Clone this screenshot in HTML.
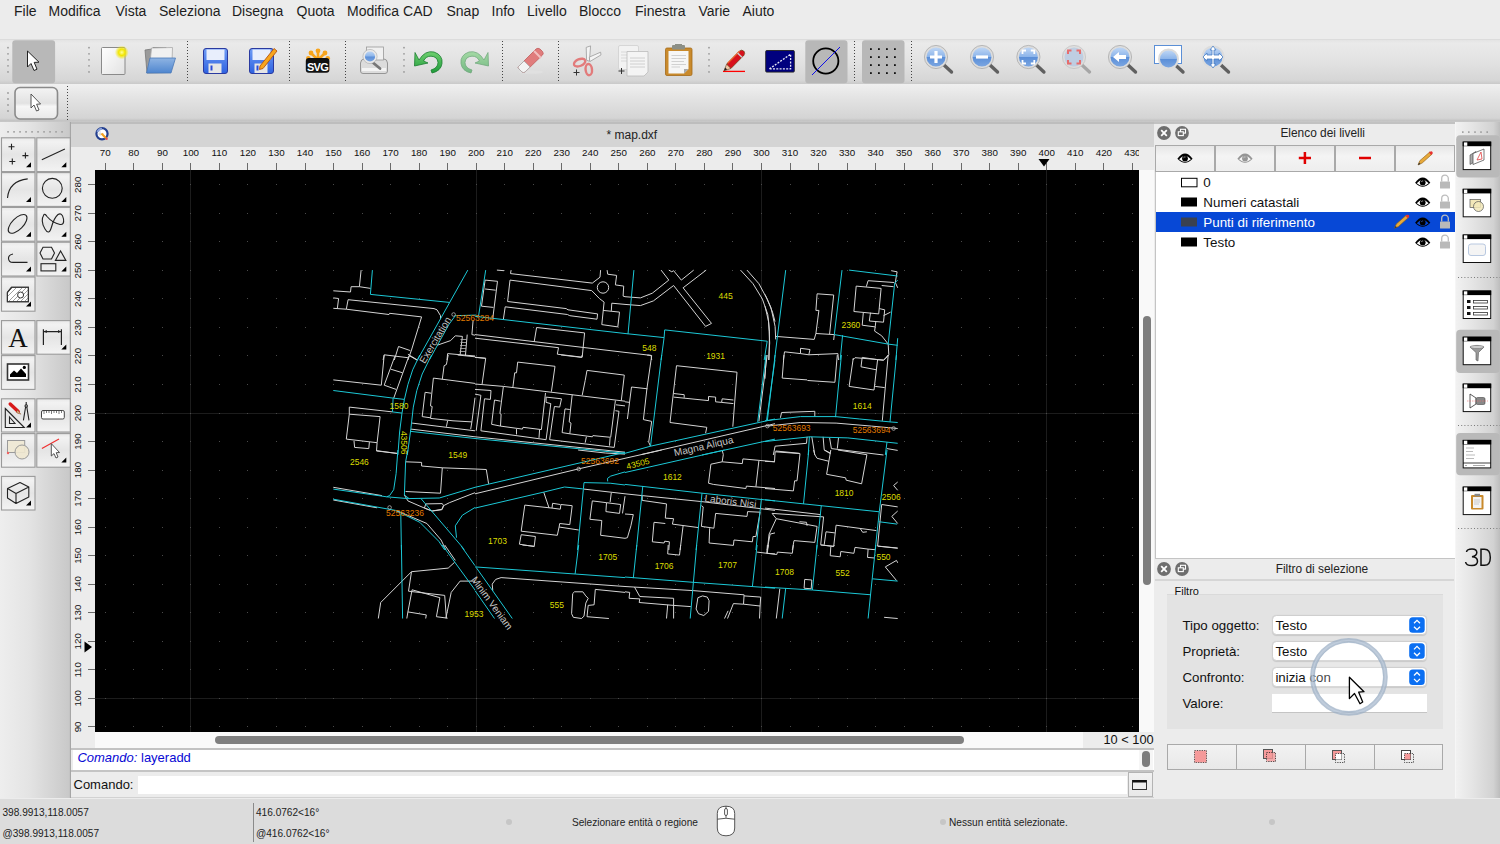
<!DOCTYPE html><html><head><meta charset="utf-8"><style>
*{box-sizing:border-box}
body{margin:0;width:1500px;height:844px;position:relative;overflow:hidden;background:#ececec;font-family:"Liberation Sans",sans-serif;color:#222}
.a{position:absolute}
.t{position:absolute;white-space:nowrap;line-height:1}
.menu span{position:absolute;top:3px;font-size:14px;color:#1d1d1d;line-height:16px}
.tb{position:absolute;left:0;width:1500px}
.sep{position:absolute;width:1px;border-left:1px dotted #555}
.hdots{position:absolute;width:2px;background-image:radial-gradient(circle,#9a9a9a 0.9px,transparent 1.1px);background-size:3px 5.9px}
.tool{position:absolute;width:34px;height:35px;border:1px solid #a8a8a8;background:linear-gradient(#f4f4f4,#e6e6e6 50%,#f0f0f0)}
.tool .c{position:absolute;right:2px;bottom:2px;width:0;height:0;border-left:8px solid transparent;border-bottom:8px solid #000}
</style></head><body>
<div class="a menu" style="left:0;top:0;width:1500px;height:39px;background:#ececec">
<span style="left:14px">File</span><span style="left:48.5px">Modifica</span><span style="left:115.5px">Vista</span><span style="left:159px">Seleziona</span><span style="left:232px">Disegna</span><span style="left:296.5px">Quota</span><span style="left:347px">Modifica CAD</span><span style="left:446.5px">Snap</span><span style="left:491.5px">Info</span><span style="left:527px">Livello</span><span style="left:579px">Blocco</span><span style="left:635px">Finestra</span><span style="left:698.5px">Varie</span><span style="left:742.5px">Aiuto</span>
</div>
<!-- toolbar 1 -->
<div class="tb" style="top:39px;height:45px;background:linear-gradient(#e4e4e4,#eaeaea 8%,#e2e2e2 50%,#d6d6d6 92%,#c9c9c9);border-top:1px solid #dcdcdc"></div>
<!-- toolbar 2 -->
<div class="tb" style="top:84px;height:38px;background:linear-gradient(#f0f0f0,#e4e4e4 35%,#d4d4d4 90%,#c4c4c4 96%,#c8c8c8)"></div>

<svg class="a" style="left:0;top:0" width="1500" height="124" viewBox="0 0 1500 124">
<defs>
<linearGradient id="gdoc" x1="0" y1="0" x2="1" y2="1"><stop offset="0" stop-color="#ffffff"/><stop offset="1" stop-color="#e2e2e2"/></linearGradient>
<radialGradient id="gglow"><stop offset="0" stop-color="#ffff9a"/><stop offset="0.45" stop-color="#f2e600"/><stop offset="1" stop-color="#f2e600" stop-opacity="0"/></radialGradient>
<linearGradient id="gfold" x1="0" y1="0" x2="0" y2="1"><stop offset="0" stop-color="#8fb4e3"/><stop offset="1" stop-color="#4f86cf"/></linearGradient>
<linearGradient id="gsave" x1="0" y1="0" x2="0" y2="1"><stop offset="0" stop-color="#6f9cf5"/><stop offset="1" stop-color="#2f62e0"/></linearGradient>
<linearGradient id="gzoom" x1="0" y1="0" x2="0" y2="1"><stop offset="0" stop-color="#c4daf6"/><stop offset="0.48" stop-color="#8db5ea"/><stop offset="0.52" stop-color="#5b8fd8"/><stop offset="1" stop-color="#7ea8e2"/></linearGradient>
<linearGradient id="ggreen" x1="0" y1="0" x2="0" y2="1"><stop offset="0" stop-color="#6fd06f"/><stop offset="1" stop-color="#1e9a3a"/></linearGradient>
<linearGradient id="gbtn2" x1="0" y1="0" x2="0" y2="1"><stop offset="0" stop-color="#f4f4f4"/><stop offset="0.5" stop-color="#e2e2e2"/><stop offset="0.6" stop-color="#f6f6f6"/><stop offset="1" stop-color="#e8e8e8"/></linearGradient>
</defs>
<g fill="#9a9a9a">
<circle cx="8" cy="47.7" r="0.9"/><circle cx="8" cy="53.8" r="0.9"/><circle cx="8" cy="59.8" r="0.9"/><circle cx="8" cy="65.8" r="0.9"/><circle cx="8" cy="71.9" r="0.9"/>
<circle cx="89" cy="47.7" r="0.9"/><circle cx="89" cy="53.8" r="0.9"/><circle cx="89" cy="59.8" r="0.9"/><circle cx="89" cy="65.8" r="0.9"/><circle cx="89" cy="71.9" r="0.9"/>
<circle cx="404" cy="47.7" r="0.9"/><circle cx="404" cy="53.8" r="0.9"/><circle cx="404" cy="59.8" r="0.9"/><circle cx="404" cy="65.8" r="0.9"/><circle cx="404" cy="71.9" r="0.9"/>
<circle cx="709" cy="47.7" r="0.9"/><circle cx="709" cy="53.8" r="0.9"/><circle cx="709" cy="59.8" r="0.9"/><circle cx="709" cy="65.8" r="0.9"/><circle cx="709" cy="71.9" r="0.9"/>
<circle cx="8" cy="93" r="0.9"/><circle cx="8" cy="99" r="0.9"/><circle cx="8" cy="105" r="0.9"/><circle cx="8" cy="111" r="0.9"/>
</g>
<g stroke="#444" stroke-width="1" stroke-dasharray="1 2">
<line x1="187.5" y1="41" x2="187.5" y2="82"/><line x1="289.5" y1="41" x2="289.5" y2="82"/><line x1="345.5" y1="41" x2="345.5" y2="82"/><line x1="502.5" y1="41" x2="502.5" y2="82"/><line x1="558.5" y1="41" x2="558.5" y2="82"/><line x1="854.5" y1="41" x2="854.5" y2="82"/><line x1="911.5" y1="41" x2="911.5" y2="82"/>
<line x1="67.5" y1="86" x2="67.5" y2="120"/>
</g>
<!-- active select -->
<rect x="12.3" y="40.2" width="42.8" height="43" rx="3" fill="#b8b8b8"/>
<path d="M27.5 51 L27.5 67 L31 63.5 L34 70.5 L37 69.2 L34.2 62.4 L39 62.2 Z" fill="#fff" stroke="#222" stroke-width="1"/>
<!-- new doc -->
<rect x="101.5" y="47.5" width="23.5" height="27" rx="1" fill="url(#gdoc)" stroke="#8a8a8a" stroke-width="1"/>
<circle cx="121.8" cy="52.4" r="7" fill="url(#gglow)"/>
<!-- open folder -->
<path d="M145 50 L152 49 L153 47.5 L166 47.5 L167 50 L169 72.5 L147 73 Z" fill="#9a9a9a" stroke="#777" stroke-width="0.8"/>
<path d="M151.5 48 L172.5 47.5 L172 62 L150 63 Z" fill="#f1f1f1" stroke="#aaa" stroke-width="0.8"/>
<path d="M150 58 L175.5 58 L171 73 L146.5 73 Z" fill="url(#gfold)" stroke="#4a79b8" stroke-width="0.8"/>
<!-- save -->
<rect x="203.5" y="48.5" width="24" height="25" rx="2.5" fill="url(#gsave)" stroke="#2a3aa0" stroke-width="1"/>
<rect x="206.5" y="49.5" width="18" height="10.5" fill="#e8eefc"/>
<rect x="208.5" y="63.5" width="13" height="9.5" fill="#e6e6e6"/>
<rect x="210.5" y="65.5" width="2" height="5" fill="#2a4ad8"/>
<!-- save as -->
<rect x="249.5" y="48.5" width="24" height="25" rx="2.5" fill="url(#gsave)" stroke="#2a3aa0" stroke-width="1"/>
<rect x="252.5" y="49.5" width="18" height="10.5" fill="#e8eefc"/>
<rect x="254.5" y="63.5" width="13" height="9.5" fill="#e6e6e6"/>
<rect x="256.5" y="65.5" width="2" height="5" fill="#2a4ad8"/>
<path d="M260 66 L274 48.5 L277 51 L263 68.5 L259.5 69.5 Z" fill="#f7a51d" stroke="#b5530e" stroke-width="0.9"/>
<!-- SVG logo -->
<g fill="#f7a41c" stroke="#f7a41c">
<path d="M318 60 L318 51.5 M318 60 L311.5 53.5 M318 60 L324.5 53.5 M318 60 L309 59 M318 60 L327 59" stroke-width="2.6"/>
<circle cx="318" cy="50.8" r="2.4" stroke="none"/><circle cx="311" cy="53" r="2.4" stroke="none"/><circle cx="325" cy="53" r="2.4" stroke="none"/><circle cx="308.3" cy="58.3" r="2.3" stroke="none"/><circle cx="327.7" cy="58.3" r="2.3" stroke="none"/>
</g>
<rect x="305.8" y="58" width="23.6" height="14.8" rx="3" fill="#111"/>
<text x="317.6" y="70.8" font-family="Liberation Sans" font-weight="bold" font-size="11" fill="#fff" text-anchor="middle" letter-spacing="-0.6">SVG</text>
<!-- print preview -->
<path d="M360.5 63 Q361 59 364 59 L384 59 Q387 59 387.5 63 L387.5 71 Q387.5 73.5 385 73.5 L363 73.5 Q360.5 73.5 360.5 71 Z" fill="#dcdcdc" stroke="#8c8c8c" stroke-width="0.9"/>
<rect x="362" y="68" width="24" height="3" fill="#f4f4f4"/>
<rect x="366.5" y="47" width="17" height="13" fill="#f0f0f0" stroke="#9a9a9a" stroke-width="0.8"/>
<line x1="371" y1="61" x2="380" y2="68.5" stroke="#777" stroke-width="2.8" stroke-linecap="round"/>
<circle cx="370" cy="56.5" r="6" fill="url(#gzoom)" stroke="#e8e8e8" stroke-width="1.8"/>
<circle cx="370" cy="56.5" r="7.1" fill="none" stroke="#aaa" stroke-width="0.6"/>
<!-- undo -->
<path d="M419 60 Q425 50 434 52 Q443 55 442 63.5 Q441 71 432 73 L431 70 Q438 68 438 62.5 Q437.5 56.5 431 56.2 Q426 56 423.5 61 L428 63 L414.5 66 L415 52.5 Z" fill="url(#ggreen)" stroke="#1a7d30" stroke-width="0.8"/>
<!-- redo -->
<g opacity="0.55"><path d="M484 60 Q478 50 469 52 Q460 55 461 63.5 Q462 71 471 73 L472 70 Q465 68 465 62.5 Q465.5 56.5 472 56.2 Q477 56 479.5 61 L475 63 L488.5 66 L488 52.5 Z" fill="url(#ggreen)" stroke="#1a7d30" stroke-width="0.8"/></g>
<!-- eraser -->
<ellipse cx="531" cy="72" rx="12" ry="1.8" fill="#e0e0e0"/>
<path d="M518.5 66.5 L536 49 Q538 47.5 540 49 L542.5 51.5 Q544 53.5 542.5 55 L525 72 Q523.5 73 522 72 L519 69 Q517.5 67.5 518.5 66.5 Z" fill="#e07c7c" stroke="#c25c5c" stroke-width="0.8"/>
<path d="M518.5 66.5 L524 61 L530 67 L525 72 Q523.5 73 522 72 L519 69 Q517.5 67.5 518.5 66.5 Z" fill="#f3f3f3" stroke="#aaa" stroke-width="0.8"/>
<path d="M534 51 L541 58" stroke="#f2c0c0" stroke-width="2"/>
<!-- scissors -->
<path d="M586.2 47.4 L590.6 45.9 L589.4 61.2 L586.6 60.3 Z" fill="#f4f4f4" stroke="#9a9a9a" stroke-width="0.8"/>
<path d="M589.3 57.1 L600.6 52.2 L601 54.9 L589.8 61.6 Z" fill="#f4f4f4" stroke="#9a9a9a" stroke-width="0.8"/>
<ellipse cx="579.6" cy="62.6" rx="6" ry="3.4" fill="none" stroke="#e27b7b" stroke-width="2.4" transform="rotate(-22 579.6 62.6)"/>
<ellipse cx="588.8" cy="69.6" rx="3.2" ry="5.6" fill="none" stroke="#e27b7b" stroke-width="2.4" transform="rotate(-6 588.8 69.6)"/>
<path d="M573.5 72.5 h6 M576.5 69.5 v6" stroke="#333" stroke-width="1"/>
<!-- copy -->
<rect x="618.5" y="45.5" width="20" height="24" rx="1.5" fill="#f2f2f2" stroke="#cfcfcf" stroke-width="0.8"/>
<g stroke="#d2d2d2" stroke-width="0.8"><line x1="621" y1="52" x2="635" y2="52"/><line x1="621" y1="55" x2="635" y2="55"/><line x1="621" y1="58" x2="635" y2="58"/><line x1="621" y1="61" x2="635" y2="61"/></g>
<path d="M627 51.5 L648 51.5 L648 72 L644 76 L627 76 Z" fill="#f4f4f4" stroke="#bbb" stroke-width="0.8"/>
<g stroke="#c6c6c6" stroke-width="0.8"><line x1="630" y1="58" x2="645" y2="58"/><line x1="630" y1="61" x2="645" y2="61"/><line x1="630" y1="64" x2="645" y2="64"/><line x1="630" y1="67" x2="645" y2="67"/></g>
<path d="M618.5 71 h6 M621.5 68 v6" stroke="#333" stroke-width="1"/>
<!-- paste -->
<rect x="665.5" y="48" width="26.5" height="27.5" rx="1.5" fill="#c98a2c" stroke="#a56a18" stroke-width="0.8"/>
<path d="M668.5 51 L688.5 51 L688.5 69 L684 73.5 L668.5 73.5 Z" fill="#f6f6f6"/>
<path d="M684 73.5 L688.5 69 L684 69 Z" fill="#a9a9a9"/>
<rect x="672" y="45" width="13" height="4.5" rx="1" fill="#8c8f86"/>
<rect x="675" y="44" width="7" height="2" fill="#8c8f86"/>
<g stroke="#c8c8c8" stroke-width="0.8"><line x1="671.5" y1="55.5" x2="686" y2="55.5"/><line x1="671.5" y1="58.5" x2="686" y2="58.5"/><line x1="671.5" y1="61.5" x2="684" y2="61.5"/><line x1="671.5" y1="64.5" x2="686" y2="64.5"/><line x1="671.5" y1="67" x2="680" y2="67"/></g>
<!-- pencil -->
<line x1="723" y1="71.4" x2="745" y2="71.4" stroke="#f00" stroke-width="1.3"/>
<path d="M726.6 64.3 L739.6 51 Q741.8 49.2 743.8 51.2 Q745.6 53.2 743.9 55.3 L730.9 68.5 Z" fill="#d8101c" stroke="#6a3a10" stroke-width="0.7"/>
<path d="M727.6 63.3 L739.8 51" stroke="#e8602a" stroke-width="1.3"/>
<path d="M737.6 53 L741.9 57.2" stroke="#c8d0d0" stroke-width="1.5"/>
<path d="M726.6 64.3 L730.9 68.5 L724 70.8 Z" fill="#f0c8a8" stroke="#6a3a10" stroke-width="0.6"/>
<path d="M724 70.8 L725.2 67.6 L727.2 69.6 Z" fill="#222"/>
<!-- blue rect -->
<rect x="765.7" y="50.5" width="28.6" height="21.6" rx="1" fill="#00007e" stroke="#222" stroke-width="0.9"/>
<path d="M769.4 68.9 L790.6 54.2 L790.6 68.9 Z" fill="none" stroke="#e6e6f4" stroke-width="1.3" stroke-dasharray="2 1.3"/>
<!-- active circle -->
<rect x="805.3" y="40.2" width="42.2" height="43" rx="3" fill="#b8b8b8"/>
<circle cx="825.8" cy="61" r="12.6" fill="none" stroke="#000" stroke-width="1.8"/>
<line x1="812" y1="75" x2="840" y2="47" stroke="#1010e8" stroke-width="1"/>
<!-- active grid -->
<rect x="862" y="40.2" width="42.5" height="43" rx="3" fill="#b8b8b8"/>
<g fill="#111">
<rect x="870" y="48.2" width="1.8" height="1.8"/><rect x="878" y="48.2" width="1.8" height="1.8"/><rect x="886" y="48.2" width="1.8" height="1.8"/><rect x="894" y="48.2" width="1.8" height="1.8"/>
<rect x="870" y="56.2" width="1.8" height="1.8"/><rect x="878" y="56.2" width="1.8" height="1.8"/><rect x="886" y="56.2" width="1.8" height="1.8"/><rect x="894" y="56.2" width="1.8" height="1.8"/>
<rect x="870" y="64.2" width="1.8" height="1.8"/><rect x="878" y="64.2" width="1.8" height="1.8"/><rect x="886" y="64.2" width="1.8" height="1.8"/><rect x="894" y="64.2" width="1.8" height="1.8"/>
<rect x="870" y="72.2" width="1.8" height="1.8"/><rect x="878" y="72.2" width="1.8" height="1.8"/><rect x="886" y="72.2" width="1.8" height="1.8"/><rect x="894" y="72.2" width="1.8" height="1.8"/>
</g>
<!-- zoom icons -->
<g id="zi">
<line x1="944" y1="65" x2="951.5" y2="72" stroke="#606060" stroke-width="3.4" stroke-linecap="round"/>
<circle cx="936" cy="57" r="10.5" fill="url(#gzoom)" stroke="#dcdcdc" stroke-width="2"/>
<circle cx="936" cy="57" r="11.6" fill="none" stroke="#9a9a9a" stroke-width="0.6"/>
<path d="M930 57 h12 M936 51 v12" stroke="#fff" stroke-width="3.2"/>
</g>
<g>
<line x1="990" y1="65" x2="997.5" y2="72" stroke="#606060" stroke-width="3.4" stroke-linecap="round"/>
<circle cx="982" cy="57" r="10.5" fill="url(#gzoom)" stroke="#dcdcdc" stroke-width="2"/>
<circle cx="982" cy="57" r="11.6" fill="none" stroke="#9a9a9a" stroke-width="0.6"/>
<path d="M976 57 h12" stroke="#fff" stroke-width="3.2"/>
</g>
<g>
<line x1="1036.4" y1="65" x2="1043.9" y2="72" stroke="#606060" stroke-width="3.4" stroke-linecap="round"/>
<circle cx="1028.4" cy="57" r="10.5" fill="url(#gzoom)" stroke="#dcdcdc" stroke-width="2"/>
<circle cx="1028.4" cy="57" r="11.6" fill="none" stroke="#9a9a9a" stroke-width="0.6"/>
<path d="M1022.5 54 v-3.5 h3.5 M1030.8 50.5 h3.5 v3.5 M1034.3 60 v3.5 h-3.5 M1026 63.5 h-3.5 v-3.5" fill="none" stroke="#fff" stroke-width="1.8"/>
</g>
<g opacity="0.8">
<line x1="1082" y1="65" x2="1089.5" y2="72" stroke="#999" stroke-width="3.2" stroke-linecap="round"/>
<circle cx="1074" cy="57" r="10.5" fill="#b6c9e2" stroke="#dcdcdc" stroke-width="2"/>
<circle cx="1074" cy="57" r="11.6" fill="none" stroke="#b0b0b0" stroke-width="0.6"/>
<path d="M1068 54 v-3.5 h3.5 M1076.5 50.5 h3.5 v3.5 M1080 60 v3.5 h-3.5 M1071.5 63.5 h-3.5 v-3.5" fill="none" stroke="#e85050" stroke-width="2"/>
</g>
<g>
<line x1="1128" y1="65" x2="1135.5" y2="72" stroke="#606060" stroke-width="3.4" stroke-linecap="round"/>
<circle cx="1120" cy="57" r="10.5" fill="url(#gzoom)" stroke="#dcdcdc" stroke-width="2"/>
<circle cx="1120" cy="57" r="11.6" fill="none" stroke="#9a9a9a" stroke-width="0.6"/>
<path d="M1113 57 L1119 52 L1119 55 L1126 55 L1126 59 L1119 59 L1119 62 Z" fill="#fff"/>
</g>
<g>
<rect x="1154.5" y="45.5" width="27" height="18" fill="#fff" stroke="#5b8fd6" stroke-width="1"/>
<line x1="1176.5" y1="66" x2="1183" y2="72" stroke="#606060" stroke-width="3.4" stroke-linecap="round"/>
<circle cx="1168.5" cy="59" r="9.5" fill="url(#gzoom)" stroke="#dcdcdc" stroke-width="2"/>
</g>
<g>
<line x1="1221" y1="65" x2="1228.5" y2="72" stroke="#606060" stroke-width="3.4" stroke-linecap="round"/>
<circle cx="1213" cy="57" r="10.5" fill="url(#gzoom)" stroke="#dcdcdc" stroke-width="2"/>
<path d="M1213 46 l-3 4 h2 v5 h-5 v-2 l-4 4 l4 4 v-2 h5 v5 h-2 l3 4 l3 -4 h-2 v-5 h5 v2 l4 -4 l-4 -4 v2 h-5 v-5 h2 Z" fill="#fff" stroke="#4a7fc4" stroke-width="0.8"/>
</g>
<!-- toolbar 2 button -->
<rect x="15" y="87.5" width="42.5" height="31.5" rx="5" fill="url(#gbtn2)" stroke="#8a8a8a" stroke-width="1.6"/>
<path d="M31 94 L31 108 L34 105 L36.5 111 L39 110 L36.6 104.2 L40.6 104 Z" fill="#fff" stroke="#444" stroke-width="0.9"/>
</svg>

<div class="a" style="left:0;top:122px;width:71px;height:676px;background:linear-gradient(90deg,#eeeeee,#e4e4e4 40%,#c9c9c9 97%,#b8b8b8)"></div>
<div class="a" style="left:70px;top:122px;width:1px;height:676px;background:#a6a6a6"></div>
<svg class="a" style="left:0;top:122px" width="72" height="400" viewBox="0 122 72 400">
<defs><linearGradient id="gtool" x1="0" y1="0" x2="0" y2="1"><stop offset="0" stop-color="#e9e9e9"/><stop offset="0.12" stop-color="#f2f2f2"/><stop offset="0.5" stop-color="#e5e5e5"/><stop offset="1" stop-color="#f3f3f3"/></linearGradient></defs>
<g fill="#a4a4a4"><rect x="7.2" y="131" width="1.7" height="1.7"/><rect x="13.2" y="131" width="1.7" height="1.7"/><rect x="19.2" y="131" width="1.7" height="1.7"/><rect x="25.2" y="131" width="1.7" height="1.7"/><rect x="31.2" y="131" width="1.7" height="1.7"/><rect x="37.2" y="131" width="1.7" height="1.7"/><rect x="43.2" y="131" width="1.7" height="1.7"/><rect x="49.2" y="131" width="1.7" height="1.7"/><rect x="55.2" y="131" width="1.7" height="1.7"/><rect x="61.2" y="131" width="1.7" height="1.7"/></g>
<g fill="url(#gtool)" stroke="#9a9a9a" stroke-width="1.1">
<rect x="1.5" y="137.8" width="33.5" height="33.8"/><rect x="36.8" y="137.8" width="33.5" height="33.8"/>
<rect x="1.5" y="172.6" width="33.5" height="33.8"/><rect x="36.8" y="172.6" width="33.5" height="33.8"/>
<rect x="1.5" y="207.4" width="33.5" height="33.8"/><rect x="36.8" y="207.4" width="33.5" height="33.8"/>
<rect x="1.5" y="242.2" width="33.5" height="33.8"/><rect x="36.8" y="242.2" width="33.5" height="33.8"/>
<rect x="1.5" y="277" width="33.5" height="34.2"/>
<rect x="1.5" y="320.6" width="33.5" height="33.6"/><rect x="36.8" y="320.6" width="33.5" height="33.6"/>
<rect x="1.5" y="355.6" width="33.5" height="33.8"/>
<rect x="1.5" y="398.8" width="33.5" height="33.2"/><rect x="36.8" y="398.8" width="33.5" height="33.2"/>
<rect x="1.5" y="433.6" width="33.5" height="33.6"/><rect x="36.8" y="433.6" width="33.5" height="33.6"/>
<rect x="1.5" y="476.4" width="33.5" height="33.6"/>
</g>
<g fill="#000">
<path d="M26 167.3 h5 v-5 Z"/><path d="M61.3 167.3 h5 v-5 Z"/>
<path d="M26 202 h5 v-5 Z"/><path d="M61.3 202 h5 v-5 Z"/>
<path d="M26 236.8 h5 v-5 Z"/><path d="M61.3 236.8 h5 v-5 Z"/>
<path d="M26 271.6 h5 v-5 Z"/><path d="M61.3 271.6 h5 v-5 Z"/>
<path d="M26 306.6 h5 v-5 Z"/>
<path d="M61.3 349.5 h5 v-5 Z"/>
<path d="M26 427.5 h5 v-5 Z"/>
<path d="M61.3 462.5 h5 v-5 Z"/>
<path d="M26 505.5 h5 v-5 Z"/>
</g>
<g stroke="#222" stroke-width="1.1" fill="none">
<path d="M8.5 146.7 h6 M11.5 143.7 v6 M22.4 155.6 h6 M25.4 152.6 v6 M9.3 161.5 h6 M12.3 158.5 v6"/>
<path d="M41.8 159.7 L64.9 149"/>
<path d="M7.5 198 Q9 181 27.7 178.9"/>
<circle cx="52.3" cy="188.3" r="9.9"/>
<ellipse cx="17.6" cy="223.9" rx="12" ry="5.6" transform="rotate(-45 17.6 223.9)"/>
<path d="M44 214.5 Q40 221 45 229 Q49 236 51.5 227 Q54 218 58 214.5 Q62 212 63.5 219 Q64.5 225 60 224.5 Q52 222.5 47 216.5 Q45 213.5 44 214.5 Z"/>
<path d="M13 254 Q8.5 255 8.5 258.2 Q8.5 262.4 13 262.4 L27.5 262.4"/>
<path d="M43 247.2 L51.5 247.2 L54.5 253 L51.5 259 L43 259 L40 253 Z"/>
<path d="M60.6 251 L65.9 260.4 L55.4 260.4 Z"/>
<rect x="41" y="263.7" width="14.8" height="7.2"/>
</g>
<g stroke="#333" stroke-width="1.1">
<path d="M11.5 287.3 L28.4 287.3 L28.4 301.8 L7.4 301.8 L7.4 292.5 Z" fill="#fff"/>
</g>
<clipPath id="hclip"><path d="M11.5 287.3 L28.4 287.3 L28.4 301.8 L7.4 301.8 L7.4 292.5 Z"/></clipPath>
<g clip-path="url(#hclip)" stroke="#777" stroke-width="0.7"><path d="M4 300 l14 -14 M7 303 l16 -16 M11 303 l16 -16 M15 303 l16 -16 M19 303 l16 -16 M23 303 l10 -10 M4 296 l10 -10"/></g>
<path d="M11.5 287.3 L28.4 287.3 L28.4 301.8 L7.4 301.8 L7.4 292.5 Z" fill="none" stroke="#333" stroke-width="1.1"/>
<circle cx="20.6" cy="295" r="3" fill="#fff" stroke="#333" stroke-width="1"/>
<text x="18" y="346.8" font-family="Liberation Serif" font-size="27" text-anchor="middle" fill="#111">A</text>
<g stroke="#222" stroke-width="1.2" fill="none"><path d="M43.4 329.2 V344.9 M61.4 329.2 V344.9 M44 331.6 H61"/></g>
<path d="M43.8 331.6 l3 -1.5 v3 Z M61 331.6 l-3 -1.5 v3 Z" fill="#222"/>
<rect x="7.5" y="364" width="21" height="16" fill="#fff" stroke="#333" stroke-width="1.6"/>
<path d="M10 377 L10 374.5 L14 370.5 L17 373 L21 368.5 L26 374 L26 377 Z" fill="#000"/>
<circle cx="24.3" cy="367.4" r="1.6" fill="#000"/>
<g stroke="#222" stroke-width="1.1" fill="none">
<path d="M5.3 408.5 L24.3 427.5 L5.3 427.5 Z"/><path d="M9.5 417 L15 423.5 L9.5 423.5 Z"/>
<path d="M25.6 407 L23.4 420.3 M26.8 407 L29 420.3 M26.2 402 V405"/><circle cx="26.2" cy="405.9" r="1.2"/>
</g>
<path d="M10.2 404 L18.2 411.6" stroke="#d81818" stroke-width="3.4" stroke-linecap="round"/><path d="M17.6 410 L20.8 414.2 L16.4 412.4 Z" fill="#e8b88a" stroke="#7a4a20" stroke-width="0.5"/>
<rect x="41.5" y="410.5" width="22.8" height="8.5" rx="1.5" fill="#fff" stroke="#444" stroke-width="1"/>
<path d="M44 411 v3 M46.5 411 v2 M49 411 v2 M51.5 411 v3 M54 411 v2 M56.5 411 v2 M59 411 v3 M61.5 411 v2" stroke="#444" stroke-width="0.7"/>
<rect x="7.5" y="440.5" width="17.2" height="12" fill="#efe9d6" stroke="#9a9a9a" stroke-width="1"/>
<circle cx="22" cy="452" r="7" fill="#efe8d0" fill-opacity="0.9" stroke="#9a9a9a" stroke-width="1"/>
<circle cx="8" cy="453" r="1.2" fill="#f06060"/>
<line x1="41.9" y1="448.6" x2="59" y2="439" stroke="#f03030" stroke-width="1.2"/>
<path d="M51.3 443.6 L51.3 456 L54 453.6 L56 458 L58 457 L56.2 452.7 L59.5 452.5 Z" fill="#fff" stroke="#444" stroke-width="0.9"/>
<g stroke="#222" stroke-width="1.1" fill="none" stroke-linejoin="round">
<path d="M7.5 488.5 L20 482.5 L28.8 487 L16 493.5 Z M7.5 488.5 L7.5 498 L16 503.5 L28.8 497 L28.8 487 M16 493.5 L16 503.5"/>
</g>
</svg>

<div class="a" style="left:71px;top:122px;width:1083px;height:1.5px;background:#bdbdbd"></div>
<div class="a" style="left:71px;top:123.5px;width:1083px;height:23px;background:#d4d4d4"></div>
<div class="t" style="left:606.5px;top:128.5px;font-size:12px;color:#222">* map.dxf</div>
<svg class="a" style="left:94px;top:126px" width="16" height="16" viewBox="0 0 16 16">
<circle cx="8" cy="7.8" r="5.6" fill="#fff" stroke="#233f8f" stroke-width="2.2"/>
<path d="M3.5 6 A5 5 0 0 1 8 2.7" stroke="#8aa0d8" stroke-width="2" fill="none"/>
<path d="M6 5 v5 M4 8 h6" stroke="#bbb" stroke-width="0.6"/>
<path d="M7.5 7.5 L12 12.2" stroke="#f4a020" stroke-width="2.2"/><circle cx="12.6" cy="12.8" r="1.2" fill="#e05050"/>
</svg>
<div class="a" style="left:71px;top:146.5px;width:1083px;height:23.5px;background:#ececec"></div>
<div class="a" style="left:71px;top:170px;width:24px;height:562px;background:#ececec"></div>
<div class="a" style="left:95px;top:170px;width:1044px;height:562px;background:#000;overflow:hidden">
<svg width="1044" height="562" viewBox="95 170 1044 562" style="position:absolute;left:0;top:0">
<line x1="190.5" y1="170" x2="190.5" y2="732" stroke="#1c1c1c" stroke-width="1"/>
<line x1="476.5" y1="170" x2="476.5" y2="732" stroke="#1c1c1c" stroke-width="1"/>
<line x1="761.5" y1="170" x2="761.5" y2="732" stroke="#1c1c1c" stroke-width="1"/>
<line x1="1046.5" y1="170" x2="1046.5" y2="732" stroke="#1c1c1c" stroke-width="1"/>
<line x1="95" y1="698.5" x2="1139" y2="698.5" stroke="#1c1c1c" stroke-width="1"/>
<line x1="95" y1="413.5" x2="1139" y2="413.5" stroke="#1c1c1c" stroke-width="1"/>
<path fill="#4a4a4a" d="M105 726h1v1h-1zM105 698h1v1h-1zM105 669h1v1h-1zM105 641h1v1h-1zM105 612h1v1h-1zM105 584h1v1h-1zM105 555h1v1h-1zM105 527h1v1h-1zM105 498h1v1h-1zM105 470h1v1h-1zM105 441h1v1h-1zM105 413h1v1h-1zM105 384h1v1h-1zM105 355h1v1h-1zM105 327h1v1h-1zM105 298h1v1h-1zM105 270h1v1h-1zM105 241h1v1h-1zM105 213h1v1h-1zM105 184h1v1h-1zM133 726h1v1h-1zM133 698h1v1h-1zM133 669h1v1h-1zM133 641h1v1h-1zM133 612h1v1h-1zM133 584h1v1h-1zM133 555h1v1h-1zM133 527h1v1h-1zM133 498h1v1h-1zM133 470h1v1h-1zM133 441h1v1h-1zM133 413h1v1h-1zM133 384h1v1h-1zM133 355h1v1h-1zM133 327h1v1h-1zM133 298h1v1h-1zM133 270h1v1h-1zM133 241h1v1h-1zM133 213h1v1h-1zM133 184h1v1h-1zM162 726h1v1h-1zM162 698h1v1h-1zM162 669h1v1h-1zM162 641h1v1h-1zM162 612h1v1h-1zM162 584h1v1h-1zM162 555h1v1h-1zM162 527h1v1h-1zM162 498h1v1h-1zM162 470h1v1h-1zM162 441h1v1h-1zM162 413h1v1h-1zM162 384h1v1h-1zM162 355h1v1h-1zM162 327h1v1h-1zM162 298h1v1h-1zM162 270h1v1h-1zM162 241h1v1h-1zM162 213h1v1h-1zM162 184h1v1h-1zM190 726h1v1h-1zM190 698h1v1h-1zM190 669h1v1h-1zM190 641h1v1h-1zM190 612h1v1h-1zM190 584h1v1h-1zM190 555h1v1h-1zM190 527h1v1h-1zM190 498h1v1h-1zM190 470h1v1h-1zM190 441h1v1h-1zM190 413h1v1h-1zM190 384h1v1h-1zM190 355h1v1h-1zM190 327h1v1h-1zM190 298h1v1h-1zM190 270h1v1h-1zM190 241h1v1h-1zM190 213h1v1h-1zM190 184h1v1h-1zM219 726h1v1h-1zM219 698h1v1h-1zM219 669h1v1h-1zM219 641h1v1h-1zM219 612h1v1h-1zM219 584h1v1h-1zM219 555h1v1h-1zM219 527h1v1h-1zM219 498h1v1h-1zM219 470h1v1h-1zM219 441h1v1h-1zM219 413h1v1h-1zM219 384h1v1h-1zM219 355h1v1h-1zM219 327h1v1h-1zM219 298h1v1h-1zM219 270h1v1h-1zM219 241h1v1h-1zM219 213h1v1h-1zM219 184h1v1h-1zM247 726h1v1h-1zM247 698h1v1h-1zM247 669h1v1h-1zM247 641h1v1h-1zM247 612h1v1h-1zM247 584h1v1h-1zM247 555h1v1h-1zM247 527h1v1h-1zM247 498h1v1h-1zM247 470h1v1h-1zM247 441h1v1h-1zM247 413h1v1h-1zM247 384h1v1h-1zM247 355h1v1h-1zM247 327h1v1h-1zM247 298h1v1h-1zM247 270h1v1h-1zM247 241h1v1h-1zM247 213h1v1h-1zM247 184h1v1h-1zM276 726h1v1h-1zM276 698h1v1h-1zM276 669h1v1h-1zM276 641h1v1h-1zM276 612h1v1h-1zM276 584h1v1h-1zM276 555h1v1h-1zM276 527h1v1h-1zM276 498h1v1h-1zM276 470h1v1h-1zM276 441h1v1h-1zM276 413h1v1h-1zM276 384h1v1h-1zM276 355h1v1h-1zM276 327h1v1h-1zM276 298h1v1h-1zM276 270h1v1h-1zM276 241h1v1h-1zM276 213h1v1h-1zM276 184h1v1h-1zM305 726h1v1h-1zM305 698h1v1h-1zM305 669h1v1h-1zM305 641h1v1h-1zM305 612h1v1h-1zM305 584h1v1h-1zM305 555h1v1h-1zM305 527h1v1h-1zM305 498h1v1h-1zM305 470h1v1h-1zM305 441h1v1h-1zM305 413h1v1h-1zM305 384h1v1h-1zM305 355h1v1h-1zM305 327h1v1h-1zM305 298h1v1h-1zM305 270h1v1h-1zM305 241h1v1h-1zM305 213h1v1h-1zM305 184h1v1h-1zM333 726h1v1h-1zM333 698h1v1h-1zM333 669h1v1h-1zM333 641h1v1h-1zM333 612h1v1h-1zM333 584h1v1h-1zM333 555h1v1h-1zM333 527h1v1h-1zM333 498h1v1h-1zM333 470h1v1h-1zM333 441h1v1h-1zM333 413h1v1h-1zM333 384h1v1h-1zM333 355h1v1h-1zM333 327h1v1h-1zM333 298h1v1h-1zM333 270h1v1h-1zM333 241h1v1h-1zM333 213h1v1h-1zM333 184h1v1h-1zM362 726h1v1h-1zM362 698h1v1h-1zM362 669h1v1h-1zM362 641h1v1h-1zM362 612h1v1h-1zM362 584h1v1h-1zM362 555h1v1h-1zM362 527h1v1h-1zM362 498h1v1h-1zM362 470h1v1h-1zM362 441h1v1h-1zM362 413h1v1h-1zM362 384h1v1h-1zM362 355h1v1h-1zM362 327h1v1h-1zM362 298h1v1h-1zM362 270h1v1h-1zM362 241h1v1h-1zM362 213h1v1h-1zM362 184h1v1h-1zM390 726h1v1h-1zM390 698h1v1h-1zM390 669h1v1h-1zM390 641h1v1h-1zM390 612h1v1h-1zM390 584h1v1h-1zM390 555h1v1h-1zM390 527h1v1h-1zM390 498h1v1h-1zM390 470h1v1h-1zM390 441h1v1h-1zM390 413h1v1h-1zM390 384h1v1h-1zM390 355h1v1h-1zM390 327h1v1h-1zM390 298h1v1h-1zM390 270h1v1h-1zM390 241h1v1h-1zM390 213h1v1h-1zM390 184h1v1h-1zM419 726h1v1h-1zM419 698h1v1h-1zM419 669h1v1h-1zM419 641h1v1h-1zM419 612h1v1h-1zM419 584h1v1h-1zM419 555h1v1h-1zM419 527h1v1h-1zM419 498h1v1h-1zM419 470h1v1h-1zM419 441h1v1h-1zM419 413h1v1h-1zM419 384h1v1h-1zM419 355h1v1h-1zM419 327h1v1h-1zM419 298h1v1h-1zM419 270h1v1h-1zM419 241h1v1h-1zM419 213h1v1h-1zM419 184h1v1h-1zM447 726h1v1h-1zM447 698h1v1h-1zM447 669h1v1h-1zM447 641h1v1h-1zM447 612h1v1h-1zM447 584h1v1h-1zM447 555h1v1h-1zM447 527h1v1h-1zM447 498h1v1h-1zM447 470h1v1h-1zM447 441h1v1h-1zM447 413h1v1h-1zM447 384h1v1h-1zM447 355h1v1h-1zM447 327h1v1h-1zM447 298h1v1h-1zM447 270h1v1h-1zM447 241h1v1h-1zM447 213h1v1h-1zM447 184h1v1h-1zM476 726h1v1h-1zM476 698h1v1h-1zM476 669h1v1h-1zM476 641h1v1h-1zM476 612h1v1h-1zM476 584h1v1h-1zM476 555h1v1h-1zM476 527h1v1h-1zM476 498h1v1h-1zM476 470h1v1h-1zM476 441h1v1h-1zM476 413h1v1h-1zM476 384h1v1h-1zM476 355h1v1h-1zM476 327h1v1h-1zM476 298h1v1h-1zM476 270h1v1h-1zM476 241h1v1h-1zM476 213h1v1h-1zM476 184h1v1h-1zM504 726h1v1h-1zM504 698h1v1h-1zM504 669h1v1h-1zM504 641h1v1h-1zM504 612h1v1h-1zM504 584h1v1h-1zM504 555h1v1h-1zM504 527h1v1h-1zM504 498h1v1h-1zM504 470h1v1h-1zM504 441h1v1h-1zM504 413h1v1h-1zM504 384h1v1h-1zM504 355h1v1h-1zM504 327h1v1h-1zM504 298h1v1h-1zM504 270h1v1h-1zM504 241h1v1h-1zM504 213h1v1h-1zM504 184h1v1h-1zM533 726h1v1h-1zM533 698h1v1h-1zM533 669h1v1h-1zM533 641h1v1h-1zM533 612h1v1h-1zM533 584h1v1h-1zM533 555h1v1h-1zM533 527h1v1h-1zM533 498h1v1h-1zM533 470h1v1h-1zM533 441h1v1h-1zM533 413h1v1h-1zM533 384h1v1h-1zM533 355h1v1h-1zM533 327h1v1h-1zM533 298h1v1h-1zM533 270h1v1h-1zM533 241h1v1h-1zM533 213h1v1h-1zM533 184h1v1h-1zM561 726h1v1h-1zM561 698h1v1h-1zM561 669h1v1h-1zM561 641h1v1h-1zM561 612h1v1h-1zM561 584h1v1h-1zM561 555h1v1h-1zM561 527h1v1h-1zM561 498h1v1h-1zM561 470h1v1h-1zM561 441h1v1h-1zM561 413h1v1h-1zM561 384h1v1h-1zM561 355h1v1h-1zM561 327h1v1h-1zM561 298h1v1h-1zM561 270h1v1h-1zM561 241h1v1h-1zM561 213h1v1h-1zM561 184h1v1h-1zM590 726h1v1h-1zM590 698h1v1h-1zM590 669h1v1h-1zM590 641h1v1h-1zM590 612h1v1h-1zM590 584h1v1h-1zM590 555h1v1h-1zM590 527h1v1h-1zM590 498h1v1h-1zM590 470h1v1h-1zM590 441h1v1h-1zM590 413h1v1h-1zM590 384h1v1h-1zM590 355h1v1h-1zM590 327h1v1h-1zM590 298h1v1h-1zM590 270h1v1h-1zM590 241h1v1h-1zM590 213h1v1h-1zM590 184h1v1h-1zM618 726h1v1h-1zM618 698h1v1h-1zM618 669h1v1h-1zM618 641h1v1h-1zM618 612h1v1h-1zM618 584h1v1h-1zM618 555h1v1h-1zM618 527h1v1h-1zM618 498h1v1h-1zM618 470h1v1h-1zM618 441h1v1h-1zM618 413h1v1h-1zM618 384h1v1h-1zM618 355h1v1h-1zM618 327h1v1h-1zM618 298h1v1h-1zM618 270h1v1h-1zM618 241h1v1h-1zM618 213h1v1h-1zM618 184h1v1h-1zM647 726h1v1h-1zM647 698h1v1h-1zM647 669h1v1h-1zM647 641h1v1h-1zM647 612h1v1h-1zM647 584h1v1h-1zM647 555h1v1h-1zM647 527h1v1h-1zM647 498h1v1h-1zM647 470h1v1h-1zM647 441h1v1h-1zM647 413h1v1h-1zM647 384h1v1h-1zM647 355h1v1h-1zM647 327h1v1h-1zM647 298h1v1h-1zM647 270h1v1h-1zM647 241h1v1h-1zM647 213h1v1h-1zM647 184h1v1h-1zM675 726h1v1h-1zM675 698h1v1h-1zM675 669h1v1h-1zM675 641h1v1h-1zM675 612h1v1h-1zM675 584h1v1h-1zM675 555h1v1h-1zM675 527h1v1h-1zM675 498h1v1h-1zM675 470h1v1h-1zM675 441h1v1h-1zM675 413h1v1h-1zM675 384h1v1h-1zM675 355h1v1h-1zM675 327h1v1h-1zM675 298h1v1h-1zM675 270h1v1h-1zM675 241h1v1h-1zM675 213h1v1h-1zM675 184h1v1h-1zM704 726h1v1h-1zM704 698h1v1h-1zM704 669h1v1h-1zM704 641h1v1h-1zM704 612h1v1h-1zM704 584h1v1h-1zM704 555h1v1h-1zM704 527h1v1h-1zM704 498h1v1h-1zM704 470h1v1h-1zM704 441h1v1h-1zM704 413h1v1h-1zM704 384h1v1h-1zM704 355h1v1h-1zM704 327h1v1h-1zM704 298h1v1h-1zM704 270h1v1h-1zM704 241h1v1h-1zM704 213h1v1h-1zM704 184h1v1h-1zM732 726h1v1h-1zM732 698h1v1h-1zM732 669h1v1h-1zM732 641h1v1h-1zM732 612h1v1h-1zM732 584h1v1h-1zM732 555h1v1h-1zM732 527h1v1h-1zM732 498h1v1h-1zM732 470h1v1h-1zM732 441h1v1h-1zM732 413h1v1h-1zM732 384h1v1h-1zM732 355h1v1h-1zM732 327h1v1h-1zM732 298h1v1h-1zM732 270h1v1h-1zM732 241h1v1h-1zM732 213h1v1h-1zM732 184h1v1h-1zM761 726h1v1h-1zM761 698h1v1h-1zM761 669h1v1h-1zM761 641h1v1h-1zM761 612h1v1h-1zM761 584h1v1h-1zM761 555h1v1h-1zM761 527h1v1h-1zM761 498h1v1h-1zM761 470h1v1h-1zM761 441h1v1h-1zM761 413h1v1h-1zM761 384h1v1h-1zM761 355h1v1h-1zM761 327h1v1h-1zM761 298h1v1h-1zM761 270h1v1h-1zM761 241h1v1h-1zM761 213h1v1h-1zM761 184h1v1h-1zM790 726h1v1h-1zM790 698h1v1h-1zM790 669h1v1h-1zM790 641h1v1h-1zM790 612h1v1h-1zM790 584h1v1h-1zM790 555h1v1h-1zM790 527h1v1h-1zM790 498h1v1h-1zM790 470h1v1h-1zM790 441h1v1h-1zM790 413h1v1h-1zM790 384h1v1h-1zM790 355h1v1h-1zM790 327h1v1h-1zM790 298h1v1h-1zM790 270h1v1h-1zM790 241h1v1h-1zM790 213h1v1h-1zM790 184h1v1h-1zM818 726h1v1h-1zM818 698h1v1h-1zM818 669h1v1h-1zM818 641h1v1h-1zM818 612h1v1h-1zM818 584h1v1h-1zM818 555h1v1h-1zM818 527h1v1h-1zM818 498h1v1h-1zM818 470h1v1h-1zM818 441h1v1h-1zM818 413h1v1h-1zM818 384h1v1h-1zM818 355h1v1h-1zM818 327h1v1h-1zM818 298h1v1h-1zM818 270h1v1h-1zM818 241h1v1h-1zM818 213h1v1h-1zM818 184h1v1h-1zM847 726h1v1h-1zM847 698h1v1h-1zM847 669h1v1h-1zM847 641h1v1h-1zM847 612h1v1h-1zM847 584h1v1h-1zM847 555h1v1h-1zM847 527h1v1h-1zM847 498h1v1h-1zM847 470h1v1h-1zM847 441h1v1h-1zM847 413h1v1h-1zM847 384h1v1h-1zM847 355h1v1h-1zM847 327h1v1h-1zM847 298h1v1h-1zM847 270h1v1h-1zM847 241h1v1h-1zM847 213h1v1h-1zM847 184h1v1h-1zM875 726h1v1h-1zM875 698h1v1h-1zM875 669h1v1h-1zM875 641h1v1h-1zM875 612h1v1h-1zM875 584h1v1h-1zM875 555h1v1h-1zM875 527h1v1h-1zM875 498h1v1h-1zM875 470h1v1h-1zM875 441h1v1h-1zM875 413h1v1h-1zM875 384h1v1h-1zM875 355h1v1h-1zM875 327h1v1h-1zM875 298h1v1h-1zM875 270h1v1h-1zM875 241h1v1h-1zM875 213h1v1h-1zM875 184h1v1h-1zM904 726h1v1h-1zM904 698h1v1h-1zM904 669h1v1h-1zM904 641h1v1h-1zM904 612h1v1h-1zM904 584h1v1h-1zM904 555h1v1h-1zM904 527h1v1h-1zM904 498h1v1h-1zM904 470h1v1h-1zM904 441h1v1h-1zM904 413h1v1h-1zM904 384h1v1h-1zM904 355h1v1h-1zM904 327h1v1h-1zM904 298h1v1h-1zM904 270h1v1h-1zM904 241h1v1h-1zM904 213h1v1h-1zM904 184h1v1h-1zM932 726h1v1h-1zM932 698h1v1h-1zM932 669h1v1h-1zM932 641h1v1h-1zM932 612h1v1h-1zM932 584h1v1h-1zM932 555h1v1h-1zM932 527h1v1h-1zM932 498h1v1h-1zM932 470h1v1h-1zM932 441h1v1h-1zM932 413h1v1h-1zM932 384h1v1h-1zM932 355h1v1h-1zM932 327h1v1h-1zM932 298h1v1h-1zM932 270h1v1h-1zM932 241h1v1h-1zM932 213h1v1h-1zM932 184h1v1h-1zM961 726h1v1h-1zM961 698h1v1h-1zM961 669h1v1h-1zM961 641h1v1h-1zM961 612h1v1h-1zM961 584h1v1h-1zM961 555h1v1h-1zM961 527h1v1h-1zM961 498h1v1h-1zM961 470h1v1h-1zM961 441h1v1h-1zM961 413h1v1h-1zM961 384h1v1h-1zM961 355h1v1h-1zM961 327h1v1h-1zM961 298h1v1h-1zM961 270h1v1h-1zM961 241h1v1h-1zM961 213h1v1h-1zM961 184h1v1h-1zM989 726h1v1h-1zM989 698h1v1h-1zM989 669h1v1h-1zM989 641h1v1h-1zM989 612h1v1h-1zM989 584h1v1h-1zM989 555h1v1h-1zM989 527h1v1h-1zM989 498h1v1h-1zM989 470h1v1h-1zM989 441h1v1h-1zM989 413h1v1h-1zM989 384h1v1h-1zM989 355h1v1h-1zM989 327h1v1h-1zM989 298h1v1h-1zM989 270h1v1h-1zM989 241h1v1h-1zM989 213h1v1h-1zM989 184h1v1h-1zM1018 726h1v1h-1zM1018 698h1v1h-1zM1018 669h1v1h-1zM1018 641h1v1h-1zM1018 612h1v1h-1zM1018 584h1v1h-1zM1018 555h1v1h-1zM1018 527h1v1h-1zM1018 498h1v1h-1zM1018 470h1v1h-1zM1018 441h1v1h-1zM1018 413h1v1h-1zM1018 384h1v1h-1zM1018 355h1v1h-1zM1018 327h1v1h-1zM1018 298h1v1h-1zM1018 270h1v1h-1zM1018 241h1v1h-1zM1018 213h1v1h-1zM1018 184h1v1h-1zM1046 726h1v1h-1zM1046 698h1v1h-1zM1046 669h1v1h-1zM1046 641h1v1h-1zM1046 612h1v1h-1zM1046 584h1v1h-1zM1046 555h1v1h-1zM1046 527h1v1h-1zM1046 498h1v1h-1zM1046 470h1v1h-1zM1046 441h1v1h-1zM1046 413h1v1h-1zM1046 384h1v1h-1zM1046 355h1v1h-1zM1046 327h1v1h-1zM1046 298h1v1h-1zM1046 270h1v1h-1zM1046 241h1v1h-1zM1046 213h1v1h-1zM1046 184h1v1h-1zM1075 726h1v1h-1zM1075 698h1v1h-1zM1075 669h1v1h-1zM1075 641h1v1h-1zM1075 612h1v1h-1zM1075 584h1v1h-1zM1075 555h1v1h-1zM1075 527h1v1h-1zM1075 498h1v1h-1zM1075 470h1v1h-1zM1075 441h1v1h-1zM1075 413h1v1h-1zM1075 384h1v1h-1zM1075 355h1v1h-1zM1075 327h1v1h-1zM1075 298h1v1h-1zM1075 270h1v1h-1zM1075 241h1v1h-1zM1075 213h1v1h-1zM1075 184h1v1h-1zM1103 726h1v1h-1zM1103 698h1v1h-1zM1103 669h1v1h-1zM1103 641h1v1h-1zM1103 612h1v1h-1zM1103 584h1v1h-1zM1103 555h1v1h-1zM1103 527h1v1h-1zM1103 498h1v1h-1zM1103 470h1v1h-1zM1103 441h1v1h-1zM1103 413h1v1h-1zM1103 384h1v1h-1zM1103 355h1v1h-1zM1103 327h1v1h-1zM1103 298h1v1h-1zM1103 270h1v1h-1zM1103 241h1v1h-1zM1103 213h1v1h-1zM1103 184h1v1h-1zM1132 726h1v1h-1zM1132 698h1v1h-1zM1132 669h1v1h-1zM1132 641h1v1h-1zM1132 612h1v1h-1zM1132 584h1v1h-1zM1132 555h1v1h-1zM1132 527h1v1h-1zM1132 498h1v1h-1zM1132 470h1v1h-1zM1132 441h1v1h-1zM1132 413h1v1h-1zM1132 384h1v1h-1zM1132 355h1v1h-1zM1132 327h1v1h-1zM1132 298h1v1h-1zM1132 270h1v1h-1zM1132 241h1v1h-1zM1132 213h1v1h-1zM1132 184h1v1h-1z"/>
<path fill="none" stroke="#d4d4d4" stroke-width="1" stroke-linejoin="round" d="M361.1 270.1 L359.4 286.7 L370.6 288.4 M333.3 290.8 L350.5 292.0 L351.1 286.7 L359.4 286.7 M333.3 297.9 L338.6 298.5 L337.4 308.0 M333.3 308.3 L346.3 309.2 L389.0 314.5 L389.6 313.3 L421.6 316.9 L411.5 350.0 L407.9 360.0 M346.3 309.2 L348.1 299.7 L434.0 308.6 L437.0 309.8 L440.5 315.7 L440.5 319.2 M398.5 346.5 L410.3 350.6 M398.5 346.5 L394.3 360.0 M384.2 354.8 L407.9 357.7 M384.2 354.8 L383.1 360.0 M437.0 345.3 L450.6 340.6 L455.3 335.8 L462.4 336.4 M407.9 354.2 L417.4 360.0 M447.6 353.6 L475.0 356.0 M447.6 353.6 L447.0 360.0 M467.2 334.6 L465.4 356.0 M462.4 336.4 L460.1 354.8 M473.1 320.4 L471.9 334.6 L475.0 335.2 M485.1 280.1 L497.5 281.3 L492.8 318.1 M485.1 280.1 L481.5 306.2 M485.1 289.0 L495.7 290.2 M481.5 306.2 L493.4 307.4 M496.9 270.1 L504.0 270.7 M511.1 270.1 L510.5 273.6 L592.3 283.1 L600.0 277.2 L600.6 270.1 M510.0 280.1 L591.7 290.6 L599.4 298.5 L604.1 302.1 M510.0 280.1 L507.6 301.5 L566.2 308.6 L568.0 309.8 L597.6 313.9 L597.0 319.2 L569.8 315.7 L567.4 314.5 L505.2 306.8 L503.4 319.2 M607.1 270.1 L607.7 274.2 L616.6 275.4 L615.4 284.9 L623.7 286.1 L623.1 296.1 L625.0 296.7 M604.1 302.1 L601.8 324.6 L617.8 326.9 L619.5 312.1 L603.0 310.4 M611.8 303.2 L611.3 310.9 M611.8 303.2 L625.0 304.4 M536.6 327.5 L534.2 341.8 M536.6 327.5 L584.6 332.9 L582.2 357.2 L557.3 354.2 L558.5 347.7 L475.0 338.2 M475.0 334.6 L625.0 352.4 M475.0 357.2 L485.7 358.3 M625.0 296.7 L640.4 297.9 L652.3 293.2 L668.8 280.1 L661.1 270.1 M625.0 304.4 L640.4 305.6 L653.4 300.9 L673.6 285.5 L705.6 326.4 L711.5 323.4 L683.1 287.8 L706.2 270.1 M668.8 270.1 L671.8 271.8 L673.6 270.7 L681.3 280.1 L693.7 270.1 M747.0 270.1 L758.9 283.7 L767.2 299.1 L772.5 312.1 L775.0 321.6 M740.5 270.1 L753.0 283.7 L762.4 299.1 L767.8 314.5 L769.5 331.1 L769.0 360.0 M625.0 352.4 L651.1 355.4 L651.7 360.0 M765.0 294.4 L770.9 307.4 L775.1 326.4 L775.7 339.4 M765.0 306.2 L768.6 321.6 L769.7 342.9 L768.6 360.0 M775.7 336.4 L814.2 339.4 L815.9 333.5 L834.3 334.6 L833.7 340.0 M815.9 333.5 L818.9 310.4 L815.9 310.4 L817.1 293.8 L833.7 295.0 L829.6 334.1 M856.2 286.1 L881.1 288.4 L878.7 313.9 L853.9 311.5 Z M866.3 286.7 L868.1 280.7 L894.1 282.5 M881.7 285.5 L893.6 286.7 M879.3 308.6 L884.7 309.8 L883.5 322.2 L869.3 321.0 L870.5 312.7 M863.3 312.7 L862.2 325.2 L875.2 326.9 L875.8 321.6 M875.2 326.9 L874.6 331.1 L881.7 335.8 L888.2 344.1 L888.8 354.8 L885.9 358.3 L883.5 360.0 M883.5 315.7 L890.6 312.1 M891.2 270.7 L897.1 271.8 L895.3 282.5 L897.7 287.8 M784.5 351.8 L800.5 353.6 L808.8 354.8 L837.9 353.6 L838.5 360.0 M800.5 348.3 L810.0 349.5 L808.8 354.8 M800.5 348.3 L800.5 353.6 M784.5 351.8 L783.4 360.0 M852.7 360.0 L855.0 357.7 L883.5 360.0 M384.2 355.0 L381.3 385.2 L333.3 379.9 M394.9 356.2 L384.2 385.2 L396.1 389.4 M390.8 369.2 L402.6 372.8 M409.1 355.6 L393.7 398.2 M409.1 355.6 L417.4 360.3 M349.3 407.1 L392.5 411.9 M349.3 407.1 L349.3 414.2 M349.3 414.2 L380.1 416.6 L377.1 442.7 L346.3 439.1 Z M377.1 442.7 L376.5 451.0 L397.3 453.3 M354.0 440.9 L354.6 447.4 L368.8 448.6 L369.4 442.1 M448.2 355.0 L446.4 364.5 L444.1 365.7 L442.3 379.3 M475.0 383.4 L433.4 378.1 L430.5 405.9 L432.2 406.5 L430.5 418.4 L453.0 420.8 L471.9 421.9 L475.0 397.7 M425.1 392.3 L431.0 393.2 M425.1 392.3 L422.2 416.6 L430.5 417.8 M412.1 423.1 L475.0 430.8 M410.9 429.1 L475.0 436.8 M447.6 420.8 L446.4 426.7 M471.9 421.9 L470.7 429.1 M457.7 355.0 L475.0 356.8 M475.0 384.0 L503.4 386.4 L552.0 392.3 L625.0 401.2 M475.0 357.4 L485.7 358.3 L482.1 384.0 M512.9 387.0 L514.7 372.8 L516.5 372.8 L517.7 362.1 L555.0 366.3 L551.4 391.7 M503.4 386.4 L499.9 413.6 L501.1 414.2 L500.5 426.1 L522.4 429.1 L523.0 427.3 L541.4 429.6 L545.5 392.9 M475.0 389.4 L491.0 390.5 L490.4 399.4 L484.5 398.8 L480.9 430.8 L546.1 439.7 L550.8 403.6 L546.1 402.4 L546.1 397.1 L561.5 398.8 L559.7 407.1 L554.4 406.5 L549.6 439.7 L614.2 447.4 L619.0 411.3 L615.4 410.7 M475.0 394.1 L480.9 395.3 L476.2 430.8 M494.5 400.0 L500.5 401.2 M494.5 400.0 L491.6 424.3 L500.5 426.1 M516.5 429.1 L516.5 434.4 M539.6 429.6 L539.0 437.9 M582.2 395.3 L585.2 380.5 L587.0 370.4 L624.3 375.1 L621.3 400.6 M572.2 394.7 L569.2 421.9 L571.0 423.1 L569.8 433.8 L592.3 436.8 L592.9 435.6 L610.7 437.3 L615.4 400.6 M565.0 408.9 L569.8 409.5 M565.0 408.9 L562.1 432.6 L569.8 433.8 M586.4 436.8 L585.2 442.7 M610.1 437.9 L609.5 445.6 M616.0 404.8 L625.0 405.9 M561.5 355.0 L581.6 357.4 L582.2 355.0 M475.0 436.8 L625.0 452.2 M647.5 355.0 L651.7 355.6 L646.9 388.8 L643.4 419.6 L651.7 421.4 L648.7 442.1 L650.5 446.2 M625.0 401.8 L629.7 402.4 M631.5 387.0 L647.5 388.8 M631.5 387.0 L627.4 419.0 M676.5 365.7 L737.0 372.2 L732.8 426.7 M676.5 365.7 L670.0 422.5 L706.8 427.3 L705.6 433.2 M673.6 393.5 L684.2 394.7 L684.2 397.7 M673.6 397.1 L708.5 400.6 L708.5 396.5 L715.6 397.1 L715.6 401.8 L721.6 402.4 L722.2 398.8 L733.4 400.0 M721.6 402.4 L733.4 403.6 M767.2 355.0 L758.9 421.4 M641.6 454.5 L775.0 423.7 M766.2 355.0 L765.0 378.7 M784.0 355.0 L782.2 378.1 L807.1 379.9 L807.7 380.5 L834.9 382.3 L837.3 355.0 M780.4 417.8 L781.6 412.5 L814.8 411.3 L814.8 416.6 M853.3 358.0 L849.1 386.4 L874.0 390.0 L877.6 359.7 L883.5 360.3 L888.2 355.0 M862.2 357.4 L861.0 366.8 L876.4 369.8 M862.2 357.4 L877.6 359.7 M875.2 386.4 L884.7 387.6 M888.2 355.0 L882.3 420.8 M767.4 426.1 L800.5 422.5 L836.1 423.1 L871.6 426.1 L897.7 428.5 M775.1 446.2 L806.5 443.3 L807.1 436.8 M775.1 446.2 L773.3 455.0 M775.7 451.0 L799.4 453.3 M811.8 436.8 L814.8 455.0 M823.1 436.8 L824.2 449.8 L830.8 453.3 M829.6 437.9 L831.4 448.6 L883.5 455.0 M838.5 437.9 L837.3 448.6 M887.0 448.6 L897.7 450.4 M376.5 450.6 L397.3 453.6 M333.3 487.3 L381.9 495.6 M333.3 500.0 L377.1 507.8 M405.6 461.8 L421.6 462.4 L421.6 466.0 L442.3 467.8 L475.0 469.0 M442.3 467.8 L440.5 493.2 L405.6 491.5 M404.4 495.0 L407.9 500.9 L424.5 508.1 L432.2 511.0 L442.3 509.2 L443.5 505.7 L449.4 502.7 L475.0 492.7 M425.7 503.9 L442.3 503.6 L443.5 505.7 L441.7 509.8 L432.2 511.0 L424.5 508.1 Z M396.1 510.4 L426.9 523.5 L441.1 540.0 L445.9 550.0 M578.1 450.0 L605.3 453.0 L625.0 454.1 M475.0 493.8 L578.1 469.0 L625.0 458.3 M475.0 469.0 L486.3 469.5 L488.6 483.8 M543.7 492.1 L549.1 508.1 M524.8 505.1 L521.2 531.2 L557.3 535.3 L559.1 527.0 L578.7 530.0 M524.8 505.1 L552.0 508.1 L560.3 509.2 L560.9 504.5 L572.2 505.7 L569.8 524.6 L559.7 523.5 L559.1 527.0 M552.6 503.3 L552.0 508.1 M552.6 503.3 L560.3 504.5 M521.2 534.7 L535.4 536.5 L534.2 546.6 L519.4 544.2 Z M584.0 489.1 L625.0 493.8 M592.3 500.9 L589.9 519.3 L601.8 520.5 L600.6 535.3 L625.0 538.3 M592.3 500.9 L606.5 502.7 L605.9 511.6 L619.5 513.4 L620.7 504.5 L606.5 502.7 M611.3 492.7 L610.1 502.1 M625.0 496.2 L622.5 513.4 M625.0 458.3 L661.7 450.0 M722.2 450.0 L723.3 454.7 L722.2 461.8 L742.3 463.6 L742.9 458.9 L775.0 461.8 M722.2 461.8 L710.9 464.2 L708.5 483.2 L713.3 484.4 L745.9 488.5 L746.4 486.1 L775.0 488.5 M758.9 460.7 L755.9 486.7 M625.0 493.8 L642.2 495.6 L700.8 501.5 L775.0 510.4 M642.2 495.6 L642.2 500.4 L666.5 503.9 L665.3 518.1 L673.6 518.7 L672.4 524.1 L698.5 527.6 M654.0 522.3 L665.3 523.5 M654.0 522.3 L652.3 541.8 L664.1 543.0 L664.7 541.2 L669.4 541.8 L668.8 550.0 M683.1 525.8 L680.1 550.0 M701.4 505.7 L703.2 506.9 L701.4 526.4 L713.9 528.2 L715.6 513.4 L747.0 516.4 L747.6 511.6 L760.1 512.2 L755.9 536.5 L753.0 536.5 L752.4 541.8 L734.0 540.0 L733.4 545.4 L709.1 543.0 L709.7 528.2 M625.0 514.0 L633.3 514.6 L630.9 525.8 L627.4 537.7 L625.0 538.3 M775.0 532.9 L770.1 534.1 L767.2 550.0 M775.1 451.8 L774.5 461.8 L765.0 461.3 M775.1 451.8 L800.0 453.6 L797.0 480.8 L794.6 480.8 L793.4 490.9 L765.0 488.5 M813.6 450.0 L814.8 454.7 L817.1 458.3 L829.0 461.3 M824.2 450.0 L830.2 453.6 M837.9 450.0 L866.9 454.7 L861.6 483.8 L846.2 480.2 L845.6 477.8 L826.6 474.3 L830.8 450.0 M765.0 508.1 L820.7 514.6 M772.1 513.4 L823.6 516.9 L820.7 544.8 L833.7 546.6 L836.1 525.2 L876.4 530.6 M772.1 513.4 L776.3 518.7 L817.1 526.4 L814.8 542.4 L794.0 540.6 L792.3 550.0 M776.3 518.7 L769.1 534.1 L767.4 550.0 M799.4 521.7 L806.5 522.3 L807.1 525.8 M826.0 531.8 L834.9 532.9 M826.0 531.8 L824.2 544.8 M860.4 528.8 L862.7 532.3 L866.9 531.8 M881.7 504.5 L897.7 506.9 M881.7 504.5 L877.6 546.0 L897.7 548.3 M897.7 482.0 L893.6 485.5 L897.7 490.3 M897.7 511.0 L891.8 516.4 L897.7 523.5 M378.3 618.5 L380.7 602.5 L411.5 571.7 L448.2 568.1 L454.7 562.2 M411.5 571.7 L408.5 591.2 L444.7 595.4 L446.4 618.2 M412.1 589.8 L439.9 597.7 L436.4 616.7 L447.6 618.2 M412.1 589.8 L407.9 611.9 L406.8 618.5 M407.9 611.9 L426.3 614.9 L425.7 618.5 M475.0 581.1 L460.1 581.1 L451.2 592.4 L445.9 618.2 M444.7 545.0 L455.3 560.4 M492.8 590.6 L492.2 584.1 L495.7 579.4 L501.1 577.6 L625.0 586.5 M574.5 591.8 L582.8 591.8 L585.8 595.9 L588.2 598.3 L585.8 603.1 L584.0 616.1 L581.6 618.5 L573.3 617.3 L571.6 613.7 L572.7 593.6 Z M625.0 592.4 L595.3 589.4 L594.1 604.8 L588.2 605.4 L587.0 616.7 L608.9 618.5 M522.4 545.0 L534.2 546.2 M625.0 586.5 L693.1 590.6 L744.1 594.8 L743.5 604.2 L760.1 606.0 L760.7 597.1 L744.1 595.9 M760.1 606.0 L759.5 618.5 M625.0 591.8 L629.7 592.4 L629.1 598.3 L639.8 598.9 L639.2 602.5 L673.6 605.4 L690.8 606.6 M634.5 587.1 L639.8 596.5 L673.6 598.3 L673.6 618.5 M667.7 604.8 L666.5 618.5 M697.9 597.7 L702.6 595.9 L707.3 597.1 L709.1 600.7 L708.5 611.4 L703.8 615.5 L698.5 613.7 L696.1 609.0 Z M733.4 603.6 L743.5 604.2 M733.4 603.6 L727.5 618.5 M728.1 610.8 L724.5 618.5 M668.2 545.0 L667.7 553.9 L679.5 555.1 L680.7 545.0 M757.1 552.1 L767.2 553.3 L775.0 553.9 M768.4 545.0 L767.2 553.3 M767.4 545.0 L766.8 553.3 L776.8 554.5 L777.4 552.1 L792.3 553.3 L793.4 545.0 M820.7 545.0 L833.7 546.2 L834.3 545.0 M830.8 546.8 L830.2 555.7 L840.2 556.8 L840.8 551.5 L853.9 553.3 L855.0 547.4 L868.1 549.1 L867.5 557.4 L874.6 558.0 M868.1 549.1 L875.2 549.7 M877.6 546.2 L897.7 548.0 M804.7 579.4 L811.8 580.0 L811.2 588.8 L804.1 588.2 Z M779.8 588.8 L776.3 618.5 M897.7 562.8 L896.5 560.4 L885.3 566.9 L896.5 580.5 M884.1 617.3 L897.7 618.5"/>
<path fill="none" stroke="#1cc8d6" stroke-width="1" stroke-linejoin="round" d="M372.4 270.1 L370.4 294.4 L449.4 302.4 M467.8 270.1 L417.4 360.0 M476.1 315.1 L455.3 315.7 L448.8 324.6 L429.3 360.0 M485.7 270.1 L478.6 315.7 M475.0 316.3 L625.0 333.5 M633.9 270.1 L628.0 334.1 M625.0 333.5 L664.1 337.6 L664.7 329.9 L767.2 341.2 L764.2 360.0 M664.1 337.6 L661.1 360.0 M785.7 270.1 L774.5 360.0 M842.0 270.1 L834.3 334.6 M849.1 270.1 L897.7 276.0 M897.7 280.1 L894.7 283.1 L888.2 344.1 M834.3 334.6 L888.2 344.1 L897.7 345.3 M897.7 338.2 L895.9 360.0 M842.6 335.2 L840.2 360.0 M419.8 355.0 L412.7 369.8 L407.9 384.6 L404.4 399.4 L402.0 413.1 L399.6 432.0 L397.9 455.0 M431.6 355.0 L422.2 374.0 L416.8 390.5 L413.3 407.1 L410.9 428.5 L407.3 455.0 M333.3 390.5 L393.7 398.2 L404.4 399.4 M393.1 398.2 L392.5 411.9 L402.0 413.1 M410.9 431.4 L475.0 438.5 M475.0 438.5 L625.0 453.3 M661.7 355.0 L650.5 446.2 M625.0 453.3 L650.5 446.2 L775.0 419.0 M702.0 455.0 L775.0 439.1 M766.0 355.0 L757.7 421.9 M775.0 359.7 L766.6 420.2 M775.1 355.0 L767.4 420.2 M841.4 355.0 L835.5 417.2 M896.5 355.0 L890.0 421.9 M765.0 420.8 L800.5 416.6 L835.5 416.6 L859.8 419.0 L890.0 421.9 L897.7 422.5 M765.0 441.5 L810.0 436.8 L847.9 437.9 L897.7 443.3 M809.4 436.8 L808.2 455.0 M887.0 442.1 L885.3 455.0 M397.9 450.0 L396.1 473.7 L393.7 489.7 L389.6 495.6 L386.6 496.8 M333.3 489.1 L386.6 496.8 L407.9 498.6 L439.3 498.0 L475.0 487.3 M407.9 450.0 L405.6 461.8 L404.4 495.0 L409.1 498.6 M333.3 499.2 L395.5 510.4 L419.8 522.3 L438.7 541.2 L444.7 550.0 M400.8 514.0 L401.4 550.0 M421.0 498.6 L462.4 547.2 L464.2 550.0 M475.0 507.5 L462.4 515.2 L455.3 525.8 L456.5 537.7 M475.0 487.3 L625.0 452.4 M475.0 508.1 L543.7 492.1 L564.5 487.0 L582.8 488.9 M584.0 482.6 L577.5 550.0 M584.0 482.6 L610.1 483.2 L625.0 485.0 M607.7 481.4 L607.5 478.4 L610.7 476.1 L625.0 471.9 M625.0 472.5 L724.5 450.0 M625.0 484.4 L702.0 493.2 L775.0 500.9 M642.8 486.1 L636.3 550.0 M702.0 493.2 L696.1 550.0 M761.3 499.8 L755.9 550.0 M808.8 450.0 L803.5 503.9 M765.0 499.8 L879.3 511.8 M887.0 450.0 L879.3 511.6 L875.2 550.0 M821.3 505.7 L816.5 550.0 M878.7 521.7 L897.1 524.1 M401.4 545.0 L402.6 618.5 M442.3 545.0 L475.0 590.0 M461.3 546.2 L475.0 565.7 M475.0 566.9 L575.1 574.0 L625.0 577.6 M578.7 545.0 L575.1 574.0 M476.2 567.5 L512.3 618.5 M475.0 590.6 L494.5 618.5 M625.0 577.0 L693.1 582.3 L775.0 588.2 M636.8 545.0 L633.3 578.2 M696.7 545.0 L690.2 618.5 M757.1 545.0 L752.4 586.5 M765.0 587.1 L812.4 590.0 L871.0 594.8 M817.1 545.0 L812.4 590.0 M875.8 545.0 L872.2 578.8 L868.1 618.5 M872.2 578.8 L897.7 581.1 M785.7 588.2 L782.2 618.5"/>
<circle cx="603" cy="287.5" r="5.7" fill="none" stroke="#d4d4d4" stroke-width="1"/>
<path fill="none" stroke="#b8b8b8" stroke-width="0.8" d="M460.5 339.5h6 M460.5 342.5h6 M460 345.5h6 M460 348.5h6 M459.5 351.5h6"/>
<circle cx="453.6" cy="314.5" r="1.8" fill="none" stroke="#c8c8c8" stroke-width="0.7"/>
<circle cx="578.7" cy="469" r="1.8" fill="none" stroke="#c8c8c8" stroke-width="0.7"/>
<circle cx="767.4" cy="426.1" r="1.8" fill="none" stroke="#c8c8c8" stroke-width="0.7"/>
<circle cx="893.6" cy="428.5" r="1.8" fill="none" stroke="#c8c8c8" stroke-width="0.7"/>
<circle cx="389.6" cy="507.5" r="1.8" fill="none" stroke="#c8c8c8" stroke-width="0.7"/>
<g font-family="Liberation Sans" font-size="8.5" text-anchor="middle">
<text x="725.7" y="299.1" fill="#dcdc00">445</text>
<text x="649.3" y="350.7" fill="#dcdc00">548</text>
<text x="715.6" y="359.0" fill="#dcdc00">1931</text>
<text x="850.9" y="327.6" fill="#dcdc00">2360</text>
<text x="399" y="409.0" fill="#dcdc00">1580</text>
<text x="404.4" y="445.7" fill="#dcdc00" transform="rotate(90 404.4 442.7)">43506</text>
<text x="457.7" y="458.3" fill="#dcdc00">1549</text>
<text x="862.2" y="408.9" fill="#dcdc00">1614</text>
<text x="359.4" y="464.8" fill="#dcdc00">2546</text>
<text x="497.5" y="543.6" fill="#dcdc00">1703</text>
<text x="638" y="466.6" fill="#dcdc00" transform="rotate(-15 638 463.6)">43505</text>
<text x="672.4" y="479.7" fill="#dcdc00">1612</text>
<text x="844.1" y="496.2" fill="#dcdc00">1810</text>
<text x="891.2" y="499.8" fill="#dcdc00">2506</text>
<text x="474" y="617.0" fill="#dcdc00">1953</text>
<text x="556.8" y="608.4" fill="#dcdc00">555</text>
<text x="607.7" y="559.8" fill="#dcdc00">1705</text>
<text x="664.1" y="568.7" fill="#dcdc00">1706</text>
<text x="727.5" y="567.5" fill="#dcdc00">1707</text>
<text x="784.5" y="574.7" fill="#dcdc00">1708</text>
<text x="842.6" y="575.8" fill="#dcdc00">552</text>
<text x="883.5" y="559.8" fill="#dcdc00">550</text>
<text x="475" y="320.5" fill="#e07a00">52563284</text>
<text x="600" y="463.7" fill="#e07a00">52563692</text>
<text x="791.7" y="430.9" fill="#e07a00">52563693</text>
<text x="871.6" y="432.6" fill="#e07a00">52563694</text>
<text x="405" y="516.4" fill="#e07a00">52563236</text>
</g>
<g font-family="Liberation Sans" font-size="10" text-anchor="middle" fill="#c4c4c4">
<text x="435" y="343.6" transform="rotate(-59 435 340)">Exercitation</text>
<text x="703.5" y="449.6" transform="rotate(-13 703.5 446)">Magna Aliqua</text>
<text x="730.5" y="504.6" transform="rotate(7 730.5 501)">Laboris Nisi</text>
<text x="492" y="606.6" transform="rotate(54 492 603)">Minim Veniam</text>
</g>
</svg>
</div>
<svg class="a" style="left:71px;top:146px" width="1068" height="586" viewBox="71 146 1068 586">
<g font-family="Liberation Sans" font-size="9.8" fill="#111" text-anchor="middle">
<text x="105.3" y="156.3">70</text>
<text x="133.8" y="156.3">80</text>
<text x="162.4" y="156.3">90</text>
<text x="190.9" y="156.3">100</text>
<text x="219.4" y="156.3">110</text>
<text x="247.9" y="156.3">120</text>
<text x="276.5" y="156.3">130</text>
<text x="305.0" y="156.3">140</text>
<text x="333.5" y="156.3">150</text>
<text x="362.1" y="156.3">160</text>
<text x="390.6" y="156.3">170</text>
<text x="419.1" y="156.3">180</text>
<text x="447.7" y="156.3">190</text>
<text x="476.2" y="156.3">200</text>
<text x="504.7" y="156.3">210</text>
<text x="533.2" y="156.3">220</text>
<text x="561.8" y="156.3">230</text>
<text x="590.3" y="156.3">240</text>
<text x="618.8" y="156.3">250</text>
<text x="647.4" y="156.3">260</text>
<text x="675.9" y="156.3">270</text>
<text x="704.4" y="156.3">280</text>
<text x="733.0" y="156.3">290</text>
<text x="761.5" y="156.3">300</text>
<text x="790.0" y="156.3">310</text>
<text x="818.5" y="156.3">320</text>
<text x="847.1" y="156.3">330</text>
<text x="875.6" y="156.3">340</text>
<text x="904.1" y="156.3">350</text>
<text x="932.7" y="156.3">360</text>
<text x="961.2" y="156.3">370</text>
<text x="989.7" y="156.3">380</text>
<text x="1018.3" y="156.3">390</text>
<text x="1046.8" y="156.3">400</text>
<text x="1075.3" y="156.3">410</text>
<text x="1103.9" y="156.3">420</text>
<text x="1132.4" y="156.3">430</text>
</g>
<path stroke="#6a6a6a" stroke-width="1" d="M105.5 163V170M133.5 163V170M162.5 163V170M190.5 163V170M219.5 163V170M247.5 163V170M276.5 163V170M305.5 163V170M333.5 163V170M362.5 163V170M390.5 163V170M419.5 163V170M447.5 163V170M476.5 163V170M504.5 163V170M533.5 163V170M561.5 163V170M590.5 163V170M618.5 163V170M647.5 163V170M675.5 163V170M704.5 163V170M732.5 163V170M761.5 163V170M790.5 163V170M818.5 163V170M847.5 163V170M875.5 163V170M904.5 163V170M932.5 163V170M961.5 163V170M989.5 163V170M1018.5 163V170M1046.5 163V170M1075.5 163V170M1103.5 163V170M1132.5 163V170M88 726.5H95M88 698.5H95M88 669.5H95M88 641.5H95M88 612.5H95M88 584.5H95M88 555.5H95M88 527.5H95M88 498.5H95M88 470.5H95M88 441.5H95M88 413.5H95M88 384.5H95M88 355.5H95M88 327.5H95M88 298.5H95M88 270.5H95M88 241.5H95M88 213.5H95M88 184.5H95"/>
<g font-family="Liberation Sans" font-size="9.8" fill="#111" text-anchor="middle">
<text transform="translate(80.9 726.9) rotate(-90)" x="0" y="0">90</text>
<text transform="translate(80.9 698.3) rotate(-90)" x="0" y="0">100</text>
<text transform="translate(80.9 669.8) rotate(-90)" x="0" y="0">110</text>
<text transform="translate(80.9 641.3) rotate(-90)" x="0" y="0">120</text>
<text transform="translate(80.9 612.8) rotate(-90)" x="0" y="0">130</text>
<text transform="translate(80.9 584.2) rotate(-90)" x="0" y="0">140</text>
<text transform="translate(80.9 555.7) rotate(-90)" x="0" y="0">150</text>
<text transform="translate(80.9 527.2) rotate(-90)" x="0" y="0">160</text>
<text transform="translate(80.9 498.6) rotate(-90)" x="0" y="0">170</text>
<text transform="translate(80.9 470.1) rotate(-90)" x="0" y="0">180</text>
<text transform="translate(80.9 441.6) rotate(-90)" x="0" y="0">190</text>
<text transform="translate(80.9 413.0) rotate(-90)" x="0" y="0">200</text>
<text transform="translate(80.9 384.5) rotate(-90)" x="0" y="0">210</text>
<text transform="translate(80.9 356.0) rotate(-90)" x="0" y="0">220</text>
<text transform="translate(80.9 327.5) rotate(-90)" x="0" y="0">230</text>
<text transform="translate(80.9 298.9) rotate(-90)" x="0" y="0">240</text>
<text transform="translate(80.9 270.4) rotate(-90)" x="0" y="0">250</text>
<text transform="translate(80.9 241.9) rotate(-90)" x="0" y="0">260</text>
<text transform="translate(80.9 213.3) rotate(-90)" x="0" y="0">270</text>
<text transform="translate(80.9 184.8) rotate(-90)" x="0" y="0">280</text>
</g>
<path d="M1038.5 159 L1049.5 159 L1044 166.5 Z" fill="#000"/>
<path d="M84.5 641.5 L84.5 652.5 L92 647 Z" fill="#000"/>
</svg>
<div class="a" style="left:1139px;top:170px;width:15px;height:562px;background:#f9f9f9"></div>
<div class="a" style="left:1143px;top:316px;width:8px;height:269px;border-radius:4px;background:#7d7d7d"></div>
<div class="a" style="left:95px;top:732px;width:988px;height:16px;background:#f9f9f9"></div>
<div class="a" style="left:71px;top:732px;width:24px;height:16px;background:#ececec"></div>
<div class="a" style="left:1083px;top:732px;width:71px;height:16px;background:#ececec"></div>
<div class="a" style="left:214.5px;top:736px;width:749px;height:8px;border-radius:4px;background:#7f7f7f"></div>
<div class="t" style="left:1103.5px;top:734px;font-size:12.8px;color:#111">10 &lt; 100</div>
<div class="a" style="left:71px;top:748px;width:1083px;height:2px;background:#c2c2c2"></div>
<div class="a" style="left:72.5px;top:750px;width:1081px;height:20.5px;background:#fff"></div>
<div class="a" style="left:1139px;top:750px;width:14px;height:20.5px;background:#f6f6f6"></div>
<div class="a" style="left:1142px;top:751px;width:8px;height:16px;border-radius:4px;background:#7d7d7d"></div>
<div class="a" style="left:71px;top:770.3px;width:1083px;height:1.4px;background:#c4c4c4"></div>
<div class="t" style="left:77.4px;top:751px;font-size:13px;color:#0808d4"><i>Comando:</i> layeradd</div>
<div class="t" style="left:73.5px;top:778.2px;font-size:13px;color:#111">Comando:</div>
<div class="a" style="left:138px;top:776.2px;width:989px;height:17.8px;background:#fff"></div>
<div class="a" style="left:1127.5px;top:772px;width:25.5px;height:25px;background:linear-gradient(#f2f2f2,#e8e8e8);border:1px solid #b4b4b4"></div>
<svg class="a" style="left:1130px;top:775px" width="20" height="20" viewBox="0 0 20 20"><rect x="2.5" y="5.5" width="14" height="9" fill="#eee" stroke="#333" stroke-width="1"/><rect x="2.5" y="5" width="14" height="2.5" fill="#111"/></svg>
<div class="a" style="left:71px;top:797px;width:1083px;height:1px;background:#d2d2d2"></div>

<div class="a" style="left:0;top:798.8px;width:1500px;height:46px;background:#dcdcdc"></div>
<div class="t" style="left:2.5px;top:808.3px;font-size:10.1px;color:#222">398.9913,118.0057</div>
<div class="t" style="left:2.5px;top:828.5px;font-size:10.1px;color:#222">@398.9913,118.0057</div>
<div class="a" style="left:253px;top:802.5px;width:1px;height:39px;background:#8a8a8a"></div>
<div class="t" style="left:256px;top:808.3px;font-size:10.1px;color:#222">416.0762&lt;16°</div>
<div class="t" style="left:256px;top:828.5px;font-size:10.1px;color:#222">@416.0762&lt;16°</div>
<div class="a" style="left:506.3px;top:819px;width:6px;height:6px;border-radius:3px;background:#c6c6c6"></div>
<div class="t" style="left:571.9px;top:818px;font-size:10.15px;color:#222">Selezionare entità o regione</div>
<svg class="a" style="left:715px;top:804px" width="22" height="34" viewBox="0 0 22 34">
<path d="M2.3 9.5 Q2.3 2.2 11 2.2 Q19.7 2.2 19.7 9.5 L19.7 24 Q19.7 31.8 11 31.8 Q2.3 31.8 2.3 24 Z" fill="#fff" stroke="#444" stroke-width="0.9"/>
<path d="M2.3 15.2 Q11 13.3 19.7 15.2 M11 2.2 V13.9" fill="none" stroke="#444" stroke-width="0.9"/>
<rect x="9.6" y="4.5" width="2.8" height="7" rx="1.4" fill="#fff" stroke="#444" stroke-width="0.9"/>
</svg>
<div class="a" style="left:940px;top:819px;width:6px;height:6px;border-radius:3px;background:#c6c6c6"></div>
<div class="t" style="left:949px;top:818px;font-size:10.15px;color:#222">Nessun entità selezionate.</div>
<div class="a" style="left:1269px;top:819px;width:6px;height:6px;border-radius:3px;background:#c6c6c6"></div>

<div class="a" style="left:1154px;top:122px;width:301px;height:676px;background:#ececec"></div>
<div class="a" style="left:1154px;top:122px;width:301px;height:1.5px;background:#c2c2c2"></div>
<svg class="a" style="left:1154px;top:122px" width="301" height="60" viewBox="1154 122 301 60">
<circle cx="1164" cy="133" r="6.9" fill="#6e6e6e"/><path d="M1161.2 130.2 l5.6 5.6 M1166.8 130.2 l-5.6 5.6" stroke="#fff" stroke-width="1.8"/>
<circle cx="1182" cy="133" r="6.9" fill="#6e6e6e"/><rect x="1180.5" y="129.3" width="5" height="3.8" fill="none" stroke="#fff" stroke-width="1.1"/><rect x="1178.3" y="131.8" width="5" height="3.8" fill="#6e6e6e" stroke="#fff" stroke-width="1.1"/>
</svg>
<div class="t" style="left:1280.4px;top:128.3px;font-size:11.9px;color:#222">Elenco dei livelli</div>
<div class="a" style="left:1155px;top:145px;width:300px;height:26.5px;background:linear-gradient(#e6e6e6,#f4f4f4 40%,#eeeeee);border:1.4px solid #a9a9a9"></div>
<div class="a" style="left:1214.3px;top:145px;width:1.4px;height:26.5px;background:#a9a9a9"></div>
<div class="a" style="left:1274.3px;top:145px;width:1.4px;height:26.5px;background:#a9a9a9"></div>
<div class="a" style="left:1334.3px;top:145px;width:1.4px;height:26.5px;background:#a9a9a9"></div>
<div class="a" style="left:1394.3px;top:145px;width:1.4px;height:26.5px;background:#a9a9a9"></div>
<div class="a" style="left:1155px;top:171.5px;width:300px;height:387.5px;background:#fff;border-left:1px solid #c4c4c4;border-bottom:1px solid #c4c4c4"></div>
<div class="a" style="left:1156px;top:212px;width:298.5px;height:19.7px;background:#0748d6"></div>
<svg class="a" style="left:1154px;top:140px" width="301" height="110" viewBox="1154 140 301 110">
<defs>
<g id="eye"><path d="M-7.6 0.8 Q0 -9.6 7.6 0.8 Q0 8.6 -7.6 0.8 Z" fill="#000"/><path d="M-5.9 1.3 Q0 -5.4 5.9 1.3 Q0 6.6 -5.9 1.3 Z" fill="#fff"/><circle cx="0" cy="0.6" r="2.9" fill="#000"/><path d="M-1.5 -0.2 Q-0.6 -1.3 0.5 -1" stroke="#fff" stroke-width="0.6" fill="none"/></g><g id="eyeb"><path d="M-7.6 0.8 Q0 -9.6 7.6 0.8 Q0 8.6 -7.6 0.8 Z" fill="#000"/><path d="M-5.9 1.3 Q0 -5.4 5.9 1.3 Q0 6.6 -5.9 1.3 Z" fill="#0748d6"/><circle cx="0" cy="0.6" r="2.9" fill="#000"/><path d="M-1.5 -0.2 Q-0.6 -1.3 0.5 -1" stroke="#4a7ae8" stroke-width="0.6" fill="none"/></g>
<g id="lock"><path d="M-3.3 -0.5 V-3.5 A3.3 3.3 0 0 1 3.3 -3.5 V-0.5" fill="none" stroke="#bdbdbd" stroke-width="1.3"/><rect x="-5" y="-0.5" width="10" height="7" rx="0.6" fill="#b9b9b9"/></g>
<g id="pen"><path d="M0 0 L1.8 -4.3 L12 -13.2 L14.2 -11 L4.2 -2 Z" fill="#e7a93a" stroke="#8b5a12" stroke-width="0.6"/><path d="M11 -12.3 L12 -13.2 Q13.5 -14.2 14.5 -13 Q15.2 -12 14.2 -11 L13.2 -10 Z" fill="#e83030"/><path d="M0 0 L1 -2.4 L2.5 -1 Z" fill="#333"/></g>
</defs>
<use href="#eye" x="1185" y="158"/>
<g opacity="0.38"><use href="#eye" x="1245" y="158"/></g>
<path d="M1298.8 158 h12.2 M1304.9 151.9 v12.2" stroke="#e00000" stroke-width="2.5"/>
<path d="M1359 158 h12" stroke="#e00000" stroke-width="2.5"/>
<use href="#pen" x="1418" y="165"/>
<use href="#eye" x="1422.7" y="182"/><use href="#lock" x="1445" y="182"/>
<use href="#eye" x="1422.7" y="202"/><use href="#lock" x="1445" y="202"/>
<use href="#eyeb" x="1422.7" y="222"/><use href="#lock" x="1445" y="222"/>
<use href="#eye" x="1422.7" y="242"/><use href="#lock" x="1445" y="242"/>
<use href="#pen" x="1394.5" y="228.3"/>
<rect x="1181.5" y="178.3" width="15.5" height="8.5" fill="#fff" stroke="#000" stroke-width="1"/>
<rect x="1181" y="197.5" width="16" height="9" fill="#000"/>
<rect x="1181" y="217.5" width="16" height="9" fill="#3a4150"/>
<rect x="1181" y="237.5" width="16" height="9" fill="#000"/>
</svg>
<div class="t" style="left:1203.3px;top:175.8px;font-size:13.4px;color:#111">0</div>
<div class="t" style="left:1203.3px;top:195.8px;font-size:13.4px;color:#111">Numeri catastali</div>
<div class="t" style="left:1203.3px;top:215.8px;font-size:13.4px;color:#fff">Punti di riferimento</div>
<div class="t" style="left:1203.3px;top:235.8px;font-size:13.4px;color:#111">Testo</div>
<!-- filter dock -->
<svg class="a" style="left:1154px;top:558px" width="301" height="24" viewBox="1154 558 301 24">
<circle cx="1164" cy="569" r="6.9" fill="#6e6e6e"/><path d="M1161.2 566.2 l5.6 5.6 M1166.8 566.2 l-5.6 5.6" stroke="#fff" stroke-width="1.8"/>
<circle cx="1182" cy="569" r="6.9" fill="#6e6e6e"/><rect x="1180.5" y="565.3" width="5" height="3.8" fill="none" stroke="#fff" stroke-width="1.1"/><rect x="1178.3" y="567.8" width="5" height="3.8" fill="#6e6e6e" stroke="#fff" stroke-width="1.1"/>
</svg>
<div class="t" style="left:1275.7px;top:563.5px;font-size:11.9px;color:#222">Filtro di selezione</div>
<div class="a" style="left:1155px;top:579.3px;width:299px;height:1.6px;background:#d6d6d6"></div>
<div class="a" style="left:1167px;top:594.4px;width:276px;height:134.3px;background:#e3e3e3;border-top:1px solid #dadada"></div>
<div class="t" style="left:1174.5px;top:586px;font-size:11px;color:#111">Filtro</div>
<div class="t" style="left:1182.4px;top:619.2px;font-size:13.3px;color:#111">Tipo oggetto:</div>
<div class="t" style="left:1182.4px;top:645.3px;font-size:13.3px;color:#111">Proprietà:</div>
<div class="t" style="left:1182.4px;top:671.4px;font-size:13.3px;color:#111">Confronto:</div>
<div class="t" style="left:1182.4px;top:697.2px;font-size:13.3px;color:#111">Valore:</div>
<div class="a" style="left:1271.6px;top:614.6px;width:155.7px;height:20.5px;background:#fff;border:1px solid #cfcfcf;border-radius:4.5px;box-shadow:0 0.5px 1px rgba(0,0,0,0.12)"></div>
<div class="a" style="left:1271.6px;top:640.7px;width:155.7px;height:20.5px;background:#fff;border:1px solid #cfcfcf;border-radius:4.5px;box-shadow:0 0.5px 1px rgba(0,0,0,0.12)"></div>
<div class="a" style="left:1271.6px;top:666.8px;width:155.7px;height:20.5px;background:#fff;border:1px solid #cfcfcf;border-radius:4.5px;box-shadow:0 0.5px 1px rgba(0,0,0,0.12)"></div>
<div class="a" style="left:1271.6px;top:692.8px;width:155.7px;height:19.8px;background:#fff;border-top:1px solid #e4e4e4;border-bottom:1px solid #c4c4c4"></div>
<svg class="a" style="left:1405px;top:612px" width="24" height="80" viewBox="1405 612 24 80">
<g id="stp"><rect x="1409.2" y="617.2" width="15.5" height="15.5" rx="3.5" fill="#0b6ff2"/><path d="M1414 623.3 L1417 620.3 L1420 623.3 M1414 626.7 L1417 629.7 L1420 626.7" fill="none" stroke="#fff" stroke-width="1.3"/></g>
<use href="#stp" y="26.1"/><use href="#stp" y="52.2"/>
</svg>
<div class="t" style="left:1275.4px;top:619.2px;font-size:13.3px;color:#111">Testo</div>
<div class="t" style="left:1275.4px;top:645.3px;font-size:13.3px;color:#111">Testo</div>
<div class="t" style="left:1275.4px;top:671.4px;font-size:13.3px;color:#111">inizia con</div>
<!-- filter buttons -->
<div class="a" style="left:1167px;top:744px;width:276px;height:26px;background:linear-gradient(#f2f2f2,#e8e8e8);border:1px solid #a9a9a9"></div>
<div class="a" style="left:1235.8px;top:744px;width:1.2px;height:26px;background:#a9a9a9"></div>
<div class="a" style="left:1304.5px;top:744px;width:1.2px;height:26px;background:#a9a9a9"></div>
<div class="a" style="left:1373.5px;top:744px;width:1.2px;height:26px;background:#a9a9a9"></div>
<svg class="a" style="left:1167px;top:744px" width="276" height="26" viewBox="1167 744 276 26">
<rect x="1194.5" y="750.5" width="12" height="12" fill="#f59a9a"/><rect x="1194.5" y="750.5" width="12" height="12" fill="none" stroke="#333" stroke-width="0.8" stroke-dasharray="1.2 1.2"/>
<rect x="1263.5" y="749.5" width="9" height="9" fill="#f59a9a" stroke="#555" stroke-width="1"/>
<rect x="1266.5" y="752.5" width="9" height="9" fill="#f59a9a" fill-opacity="0.8"/><rect x="1266.5" y="752.5" width="9" height="9" fill="none" stroke="#222" stroke-width="0.8" stroke-dasharray="1.2 1.2"/>
<rect x="1332.5" y="750.5" width="9" height="9" fill="#f59a9a" stroke="#555" stroke-width="1"/>
<rect x="1335.5" y="753.5" width="6" height="6" fill="#fff"/>
<rect x="1335.5" y="753.5" width="9" height="9" fill="none" stroke="#222" stroke-width="0.8" stroke-dasharray="1.2 1.2"/>
<rect x="1401.5" y="750.5" width="9" height="9" fill="#fff" stroke="#444" stroke-width="1"/>
<rect x="1404.5" y="753.5" width="6" height="6" fill="#f59a9a"/>
<rect x="1404.5" y="753.5" width="9" height="9" fill="none" stroke="#222" stroke-width="0.8" stroke-dasharray="1.2 1.2"/>
</svg>
<!-- cursor ring + arrow -->
<svg class="a" style="left:1300px;top:628px" width="100" height="100" viewBox="1300 628 100 100">
<circle cx="1348.9" cy="676.9" r="36" fill="#fff" fill-opacity="0.22"/>
<circle cx="1348.9" cy="676.9" r="36.6" fill="none" stroke="#9db0c6" stroke-opacity="0.75" stroke-width="4.6"/>
<circle cx="1348.9" cy="676.9" r="36.6" fill="none" stroke="#c8d4e2" stroke-opacity="0.6" stroke-width="1.2"/>
<circle cx="1348.9" cy="676.9" r="34.5" fill="none" stroke="#8ca2bb" stroke-opacity="0.45" stroke-width="0.8"/>
<path d="M1349.4 677.3 L1349.4 698.6 L1354.5 693.5 L1360 703.7 L1362.7 702 L1358.7 692.2 L1364 691.7 Z" fill="#fff" stroke="#000" stroke-width="1.3" stroke-linejoin="round"/>
</svg>

<div class="a" style="left:1455px;top:122px;width:45px;height:676px;background:linear-gradient(90deg,#f2f2f2,#e6e6e6 35%,#d2d2d2 85%,#bdbdbd)"></div>
<div class="a" style="left:1455px;top:122px;width:1px;height:676px;background:#f6f6f6"></div>
<svg class="a" style="left:1455px;top:122px" width="45" height="460" viewBox="1455 122 45 460">
<defs>
<g id="win"><rect x="0.5" y="0.5" width="27.5" height="27.5" fill="#fff" stroke="#111" stroke-width="1"/><rect x="0" y="0" width="28.5" height="4.6" fill="#000"/><rect x="1.2" y="0.8" width="3.4" height="3.4" fill="#fff"/></g>
</defs>
<g fill="#9c9c9c"><rect x="1462" y="131.3" width="1.6" height="1.6"/><rect x="1468" y="131.3" width="1.6" height="1.6"/><rect x="1474.2" y="131.3" width="1.6" height="1.6"/><rect x="1480.2" y="131.3" width="1.6" height="1.6"/><rect x="1486.4" y="131.3" width="1.6" height="1.6"/></g>
<rect x="1456.2" y="135.3" width="43.5" height="42.2" rx="4" fill="#b9b9b9"/>
<rect x="1456.2" y="329.7" width="43.5" height="43.3" rx="4" fill="#b9b9b9"/>
<rect x="1456.2" y="432.9" width="43.5" height="42.4" rx="4" fill="#b9b9b9"/>
<g fill="#888"><path d="M1458 277.5h42" stroke="#7a7a7a" stroke-width="1" stroke-dasharray="1 2.2"/><path d="M1458 425.5h42" stroke="#7a7a7a" stroke-width="1" stroke-dasharray="1 2.2"/><path d="M1458 528.5h42" stroke="#7a7a7a" stroke-width="1" stroke-dasharray="1 2.2"/></g>
<use href="#win" x="1462.7" y="141.6"/>
<path d="M1470 155 L1476 151.5 L1476 161 L1470 164.5 Z" fill="#aaa" stroke="#444" stroke-width="0.6"/>
<path d="M1473 153.5 L1484 149 L1484 160 L1473 164.5 Z" fill="#fff" stroke="#444" stroke-width="0.7"/>
<path d="M1477 160 L1481 152 L1482 159 Z" fill="none" stroke="#e04040" stroke-width="0.8"/>
<use href="#win" x="1462.7" y="188.8"/>
<rect x="1470" y="199.5" width="10.5" height="8" fill="#f2e7b8" stroke="#555" stroke-width="0.7"/>
<circle cx="1478.5" cy="206.5" r="5" fill="#f2e7b8" fill-opacity="0.85" stroke="#555" stroke-width="0.7"/>
<use href="#win" x="1462.7" y="234.5"/>
<rect x="1468.5" y="244" width="17" height="11.5" rx="2.5" fill="#f4f4f4" stroke="#b8c8e0" stroke-width="1"/>
<use href="#win" x="1462.7" y="290.5"/>
<g fill="#111"><rect x="1467" y="300" width="3.5" height="3"/><rect x="1467" y="306" width="3.5" height="3"/><rect x="1467" y="312" width="3.5" height="3"/></g>
<g fill="#fff" stroke="#333" stroke-width="0.8"><rect x="1473.5" y="300.5" width="14" height="2.5"/><rect x="1473.5" y="306.5" width="14" height="2.5"/><rect x="1473.5" y="312.5" width="14" height="2.5"/></g>
<use href="#win" x="1462.7" y="336.7"/>
<path d="M1470 347 Q1477 344 1484 347 L1478.5 352.5 L1478 361 L1476 360 L1476 352.5 Z" fill="#9a9a9a" stroke="#555" stroke-width="0.6"/>
<ellipse cx="1477" cy="347" rx="7" ry="1.6" fill="#ccc" stroke="#666" stroke-width="0.5"/>
<use href="#win" x="1462.7" y="383.6"/>
<path d="M1470 394 L1476 398 L1476 404 L1470 408 Z" fill="#fff" stroke="#333" stroke-width="0.8"/>
<rect x="1476" y="397.5" width="9" height="7" rx="1.5" fill="#888" stroke="#444" stroke-width="0.6"/>
<path d="M1467 401 h21" stroke="#f07070" stroke-width="0.6" stroke-dasharray="1.5 1"/>
<use href="#win" x="1462.7" y="439.9"/>
<g stroke="#777" stroke-width="0.5"><path d="M1466 448 h8 M1466 451.5 h7 M1466 455 h9 M1466 458.5 h8"/></g>
<path d="M1463 463 h28" stroke="#111" stroke-width="0.8"/>
<g stroke="#555" stroke-width="0.5"><path d="M1465 465.5 h2 M1473 465.5 h12"/></g>
<use href="#win" x="1462.7" y="486.6"/>
<rect x="1471" y="495" width="12.5" height="14.5" rx="1" fill="#c98a2c"/>
<rect x="1473" y="497" width="8.5" height="11" fill="#f4f4f4"/>
<rect x="1474.5" y="493.8" width="5.5" height="2.5" fill="#888"/>
<g stroke="#b0b0b0" stroke-width="0.6"><path d="M1474 500h6 M1474 502h6 M1474 504h5"/></g>
<path d="M1466.5 552 Q1467 549 1472 549 Q1476.8 549 1476.8 552.5 Q1476.8 556 1472 556.8 Q1477.5 557 1477.5 561.3 Q1477.5 565.5 1472 565.5 Q1466 565.5 1465.6 562" fill="none" stroke="#111" stroke-width="1.5"/>
<path d="M1481 549.3 L1484.5 549.3 Q1490.3 549.3 1490.3 557.4 Q1490.3 565.3 1484.5 565.3 L1481 565.3 Z" fill="none" stroke="#111" stroke-width="1.5"/>
</svg>

</body></html>
